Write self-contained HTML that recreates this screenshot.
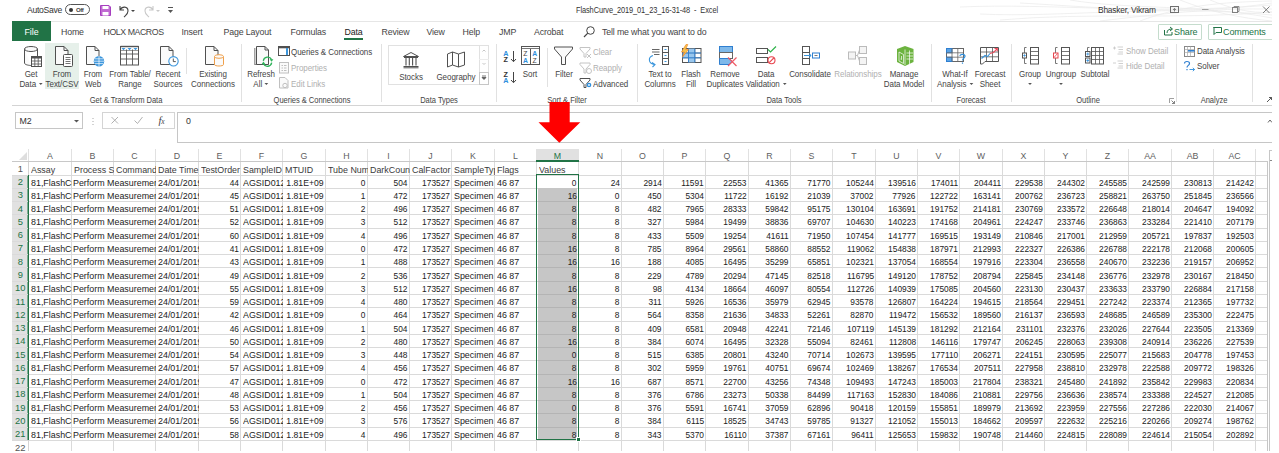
<!DOCTYPE html><html><head><meta charset="utf-8"><style>
*{margin:0;padding:0;box-sizing:border-box}
html,body{width:1279px;height:453px;overflow:hidden;background:#fff}
body{position:relative;font-family:"Liberation Sans",sans-serif;color:#262626}
.ab{position:absolute}
.t{position:absolute;white-space:nowrap;line-height:1}
.rb{font-size:8.4px;color:#444}
.ctr{transform:translateX(-50%)}
.dis{color:#b4b4b4}
.c{position:absolute;white-space:nowrap;overflow:hidden;font-size:9.9px;height:13px;color:#222}
.s{position:absolute;top:3.5px;line-height:1}
.sl{left:2.5px;transform:scale(0.9,1.0);transform-origin:0 0}
.sr{right:1.6px;transform-origin:100% 0}
.r{text-align:right}
.gl{position:absolute;background:#dadada}
.lb{font-size:8.6px;color:#444;transform:translateX(-50%) scaleX(0.93);letter-spacing:-0.05px}
.glb{transform:translateX(-50%) scaleX(0.88)}
.ll{transform:scaleX(0.93);transform-origin:0 0}
.dis{color:#b0b0b0}
.sep{top:44px;width:1px;height:58px;background:#e1e1e1}
.dd{display:inline-block;width:0;height:0;border-left:2.2px solid transparent;border-right:2.2px solid transparent;border-top:2.4px solid #555;vertical-align:middle;margin-left:3px;position:relative;top:-1px}
.tab{top:27.5px;font-size:8.8px;color:#444;letter-spacing:-0.15px}
</style></head><body>
<div class="gl" style="left:28px;top:149px;width:1px;height:13px;background:#e1e1e1"></div><div class="gl" style="left:71px;top:149px;width:1px;height:13px;background:#e1e1e1"></div><div class="gl" style="left:113px;top:149px;width:1px;height:13px;background:#e1e1e1"></div><div class="gl" style="left:155px;top:149px;width:1px;height:13px;background:#e1e1e1"></div><div class="gl" style="left:198px;top:149px;width:1px;height:13px;background:#e1e1e1"></div><div class="gl" style="left:240px;top:149px;width:1px;height:13px;background:#e1e1e1"></div><div class="gl" style="left:282px;top:149px;width:1px;height:13px;background:#e1e1e1"></div><div class="gl" style="left:325px;top:149px;width:1px;height:13px;background:#e1e1e1"></div><div class="gl" style="left:367px;top:149px;width:1px;height:13px;background:#e1e1e1"></div><div class="gl" style="left:409px;top:149px;width:1px;height:13px;background:#e1e1e1"></div><div class="gl" style="left:451px;top:149px;width:1px;height:13px;background:#e1e1e1"></div><div class="gl" style="left:494px;top:149px;width:1px;height:13px;background:#e1e1e1"></div><div class="gl" style="left:536px;top:149px;width:1px;height:13px;background:#e1e1e1"></div><div class="gl" style="left:578px;top:149px;width:1px;height:13px;background:#e1e1e1"></div><div class="gl" style="left:621px;top:149px;width:1px;height:13px;background:#e1e1e1"></div><div class="gl" style="left:663px;top:149px;width:1px;height:13px;background:#e1e1e1"></div><div class="gl" style="left:705px;top:149px;width:1px;height:13px;background:#e1e1e1"></div><div class="gl" style="left:748px;top:149px;width:1px;height:13px;background:#e1e1e1"></div><div class="gl" style="left:790px;top:149px;width:1px;height:13px;background:#e1e1e1"></div><div class="gl" style="left:832px;top:149px;width:1px;height:13px;background:#e1e1e1"></div><div class="gl" style="left:875px;top:149px;width:1px;height:13px;background:#e1e1e1"></div><div class="gl" style="left:917px;top:149px;width:1px;height:13px;background:#e1e1e1"></div><div class="gl" style="left:959px;top:149px;width:1px;height:13px;background:#e1e1e1"></div><div class="gl" style="left:1002px;top:149px;width:1px;height:13px;background:#e1e1e1"></div><div class="gl" style="left:1044px;top:149px;width:1px;height:13px;background:#e1e1e1"></div><div class="gl" style="left:1086px;top:149px;width:1px;height:13px;background:#e1e1e1"></div><div class="gl" style="left:1128px;top:149px;width:1px;height:13px;background:#e1e1e1"></div><div class="gl" style="left:1171px;top:149px;width:1px;height:13px;background:#e1e1e1"></div><div class="gl" style="left:1213px;top:149px;width:1px;height:13px;background:#e1e1e1"></div><div class="gl" style="left:1255px;top:149px;width:1px;height:13px;background:#e1e1e1"></div><div class="gl" style="left:12px;top:161px;width:1256px;height:1px;background:#c8c8c8"></div><div class="ab" style="left:536px;top:149px;width:43px;height:13px;background:#e1e1e1"></div><div class="ab" style="left:536px;top:160px;width:43px;height:2px;background:#217346"></div><svg class="ab" style="left:18px;top:151px" width="10" height="10"><polygon points="9,1 9,9 1,9" fill="#dedede"/></svg><div class="t ctr" style="left:50.0px;top:151.6px;font-size:8.8px;color:#606060">A</div><div class="t ctr" style="left:92.5px;top:151.6px;font-size:8.8px;color:#606060">B</div><div class="t ctr" style="left:134.5px;top:151.6px;font-size:8.8px;color:#606060">C</div><div class="t ctr" style="left:177.0px;top:151.6px;font-size:8.8px;color:#606060">D</div><div class="t ctr" style="left:219.5px;top:151.6px;font-size:8.8px;color:#606060">E</div><div class="t ctr" style="left:261.5px;top:151.6px;font-size:8.8px;color:#606060">F</div><div class="t ctr" style="left:304.0px;top:151.6px;font-size:8.8px;color:#606060">G</div><div class="t ctr" style="left:346.5px;top:151.6px;font-size:8.8px;color:#606060">H</div><div class="t ctr" style="left:388.5px;top:151.6px;font-size:8.8px;color:#606060">I</div><div class="t ctr" style="left:430.5px;top:151.6px;font-size:8.8px;color:#606060">J</div><div class="t ctr" style="left:473.0px;top:151.6px;font-size:8.8px;color:#606060">K</div><div class="t ctr" style="left:515.5px;top:151.6px;font-size:8.8px;color:#606060">L</div><div class="t ctr" style="left:557.5px;top:151.6px;font-size:8.8px;color:#217346">M</div><div class="t ctr" style="left:600.0px;top:151.6px;font-size:8.8px;color:#606060">N</div><div class="t ctr" style="left:642.5px;top:151.6px;font-size:8.8px;color:#606060">O</div><div class="t ctr" style="left:684.5px;top:151.6px;font-size:8.8px;color:#606060">P</div><div class="t ctr" style="left:727.0px;top:151.6px;font-size:8.8px;color:#606060">Q</div><div class="t ctr" style="left:769.5px;top:151.6px;font-size:8.8px;color:#606060">R</div><div class="t ctr" style="left:811.5px;top:151.6px;font-size:8.8px;color:#606060">S</div><div class="t ctr" style="left:854.0px;top:151.6px;font-size:8.8px;color:#606060">T</div><div class="t ctr" style="left:896.5px;top:151.6px;font-size:8.8px;color:#606060">U</div><div class="t ctr" style="left:938.5px;top:151.6px;font-size:8.8px;color:#606060">V</div><div class="t ctr" style="left:981.0px;top:151.6px;font-size:8.8px;color:#606060">W</div><div class="t ctr" style="left:1023.5px;top:151.6px;font-size:8.8px;color:#606060">X</div><div class="t ctr" style="left:1065.5px;top:151.6px;font-size:8.8px;color:#606060">Y</div><div class="t ctr" style="left:1107.5px;top:151.6px;font-size:8.8px;color:#606060">Z</div><div class="t ctr" style="left:1150.0px;top:151.6px;font-size:8.8px;color:#606060">AA</div><div class="t ctr" style="left:1192.5px;top:151.6px;font-size:8.8px;color:#606060">AB</div><div class="t ctr" style="left:1234.5px;top:151.6px;font-size:8.8px;color:#606060">AC</div><div class="ab" style="left:12px;top:175px;width:16px;height:265px;background:#e1e1e1"></div><div class="ab" style="left:28px;top:175px;width:1px;height:265px;background:#217346"></div><div class="ab" style="left:27px;top:175px;width:1px;height:265px;background:#7fae93"></div><div class="gl" style="left:12px;top:175px;width:1255px;height:1px"></div><div class="gl" style="left:12px;top:188px;width:1255px;height:1px"></div><div class="gl" style="left:12px;top:201px;width:1255px;height:1px"></div><div class="gl" style="left:12px;top:214px;width:1255px;height:1px"></div><div class="gl" style="left:12px;top:228px;width:1255px;height:1px"></div><div class="gl" style="left:12px;top:241px;width:1255px;height:1px"></div><div class="gl" style="left:12px;top:254px;width:1255px;height:1px"></div><div class="gl" style="left:12px;top:267px;width:1255px;height:1px"></div><div class="gl" style="left:12px;top:281px;width:1255px;height:1px"></div><div class="gl" style="left:12px;top:294px;width:1255px;height:1px"></div><div class="gl" style="left:12px;top:307px;width:1255px;height:1px"></div><div class="gl" style="left:12px;top:321px;width:1255px;height:1px"></div><div class="gl" style="left:12px;top:334px;width:1255px;height:1px"></div><div class="gl" style="left:12px;top:347px;width:1255px;height:1px"></div><div class="gl" style="left:12px;top:360px;width:1255px;height:1px"></div><div class="gl" style="left:12px;top:374px;width:1255px;height:1px"></div><div class="gl" style="left:12px;top:387px;width:1255px;height:1px"></div><div class="gl" style="left:12px;top:400px;width:1255px;height:1px"></div><div class="gl" style="left:12px;top:413px;width:1255px;height:1px"></div><div class="gl" style="left:12px;top:427px;width:1255px;height:1px"></div><div class="gl" style="left:12px;top:440px;width:1255px;height:1px"></div><div class="gl" style="left:12px;top:453px;width:1255px;height:1px"></div><div class="gl" style="left:28px;top:162px;width:1px;height:289px;background:#d4d4d4"></div><div class="gl" style="left:71px;top:162px;width:1px;height:289px"></div><div class="gl" style="left:113px;top:162px;width:1px;height:13px"></div><div class="gl" style="left:113px;top:439px;width:1px;height:12px"></div><div class="gl" style="left:155px;top:162px;width:1px;height:289px"></div><div class="gl" style="left:198px;top:162px;width:1px;height:289px"></div><div class="gl" style="left:240px;top:162px;width:1px;height:289px"></div><div class="gl" style="left:282px;top:162px;width:1px;height:289px"></div><div class="gl" style="left:325px;top:162px;width:1px;height:289px"></div><div class="gl" style="left:367px;top:162px;width:1px;height:289px"></div><div class="gl" style="left:409px;top:162px;width:1px;height:289px"></div><div class="gl" style="left:451px;top:162px;width:1px;height:289px"></div><div class="gl" style="left:494px;top:162px;width:1px;height:289px"></div><div class="gl" style="left:536px;top:162px;width:1px;height:289px"></div><div class="gl" style="left:578px;top:162px;width:1px;height:289px"></div><div class="gl" style="left:621px;top:162px;width:1px;height:289px"></div><div class="gl" style="left:663px;top:162px;width:1px;height:289px"></div><div class="gl" style="left:705px;top:162px;width:1px;height:289px"></div><div class="gl" style="left:748px;top:162px;width:1px;height:289px"></div><div class="gl" style="left:790px;top:162px;width:1px;height:289px"></div><div class="gl" style="left:832px;top:162px;width:1px;height:289px"></div><div class="gl" style="left:875px;top:162px;width:1px;height:289px"></div><div class="gl" style="left:917px;top:162px;width:1px;height:289px"></div><div class="gl" style="left:959px;top:162px;width:1px;height:289px"></div><div class="gl" style="left:1002px;top:162px;width:1px;height:289px"></div><div class="gl" style="left:1044px;top:162px;width:1px;height:289px"></div><div class="gl" style="left:1086px;top:162px;width:1px;height:289px"></div><div class="gl" style="left:1128px;top:162px;width:1px;height:289px"></div><div class="gl" style="left:1171px;top:162px;width:1px;height:289px"></div><div class="gl" style="left:1213px;top:162px;width:1px;height:289px"></div><div class="gl" style="left:1255px;top:162px;width:1px;height:289px"></div><div class="ab" style="left:28px;top:175px;width:1px;height:265px;background:#217346"></div><div class="ab" style="left:1267px;top:162px;width:1px;height:289px;background:#c6c6c6"></div><div class="ab" style="left:538px;top:188px;width:39px;height:251px;background:#c6c6c6"></div><div class="ab" style="left:538px;top:201px;width:39px;height:1px;background:#b4b4b4"></div><div class="ab" style="left:538px;top:214px;width:39px;height:1px;background:#b4b4b4"></div><div class="ab" style="left:538px;top:228px;width:39px;height:1px;background:#b4b4b4"></div><div class="ab" style="left:538px;top:241px;width:39px;height:1px;background:#b4b4b4"></div><div class="ab" style="left:538px;top:254px;width:39px;height:1px;background:#b4b4b4"></div><div class="ab" style="left:538px;top:267px;width:39px;height:1px;background:#b4b4b4"></div><div class="ab" style="left:538px;top:281px;width:39px;height:1px;background:#b4b4b4"></div><div class="ab" style="left:538px;top:294px;width:39px;height:1px;background:#b4b4b4"></div><div class="ab" style="left:538px;top:307px;width:39px;height:1px;background:#b4b4b4"></div><div class="ab" style="left:538px;top:321px;width:39px;height:1px;background:#b4b4b4"></div><div class="ab" style="left:538px;top:334px;width:39px;height:1px;background:#b4b4b4"></div><div class="ab" style="left:538px;top:347px;width:39px;height:1px;background:#b4b4b4"></div><div class="ab" style="left:538px;top:360px;width:39px;height:1px;background:#b4b4b4"></div><div class="ab" style="left:538px;top:374px;width:39px;height:1px;background:#b4b4b4"></div><div class="ab" style="left:538px;top:387px;width:39px;height:1px;background:#b4b4b4"></div><div class="ab" style="left:538px;top:400px;width:39px;height:1px;background:#b4b4b4"></div><div class="ab" style="left:538px;top:413px;width:39px;height:1px;background:#b4b4b4"></div><div class="ab" style="left:538px;top:427px;width:39px;height:1px;background:#b4b4b4"></div><div class="t ctr" style="left:20.3px;top:163.8px;font-size:9.4px;color:#555">1</div><div class="t ctr" style="left:20.3px;top:177.1px;font-size:9.4px;color:#217346">2</div><div class="t ctr" style="left:20.3px;top:190.3px;font-size:9.4px;color:#217346">3</div><div class="t ctr" style="left:20.3px;top:203.6px;font-size:9.4px;color:#217346">4</div><div class="t ctr" style="left:20.3px;top:216.9px;font-size:9.4px;color:#217346">5</div><div class="t ctr" style="left:20.3px;top:230.2px;font-size:9.4px;color:#217346">6</div><div class="t ctr" style="left:20.3px;top:243.4px;font-size:9.4px;color:#217346">7</div><div class="t ctr" style="left:20.3px;top:256.7px;font-size:9.4px;color:#217346">8</div><div class="t ctr" style="left:20.3px;top:270.0px;font-size:9.4px;color:#217346">9</div><div class="t ctr" style="left:20.3px;top:283.2px;font-size:9.4px;color:#217346">10</div><div class="t ctr" style="left:20.3px;top:296.5px;font-size:9.4px;color:#217346">11</div><div class="t ctr" style="left:20.3px;top:309.8px;font-size:9.4px;color:#217346">12</div><div class="t ctr" style="left:20.3px;top:323.0px;font-size:9.4px;color:#217346">13</div><div class="t ctr" style="left:20.3px;top:336.3px;font-size:9.4px;color:#217346">14</div><div class="t ctr" style="left:20.3px;top:349.6px;font-size:9.4px;color:#217346">15</div><div class="t ctr" style="left:20.3px;top:362.9px;font-size:9.4px;color:#217346">16</div><div class="t ctr" style="left:20.3px;top:376.1px;font-size:9.4px;color:#217346">17</div><div class="t ctr" style="left:20.3px;top:389.4px;font-size:9.4px;color:#217346">18</div><div class="t ctr" style="left:20.3px;top:402.7px;font-size:9.4px;color:#217346">19</div><div class="t ctr" style="left:20.3px;top:415.9px;font-size:9.4px;color:#217346">20</div><div class="t ctr" style="left:20.3px;top:429.2px;font-size:9.4px;color:#217346">21</div><div class="t ctr" style="left:20.3px;top:442.5px;font-size:9.4px;color:#555">22</div><div class="c" style="left:28.5px;top:161.8px;width:43.0px"><span class="s sl" style="top:2.8px;color:#3a3a3a">Assay</span></div><div class="c" style="left:71.5px;top:161.8px;width:42.0px"><span class="s sl" style="top:2.8px;color:#3a3a3a">Process S</span></div><div class="c" style="left:113.5px;top:161.8px;width:42.0px"><span class="s sl" style="top:2.8px;color:#3a3a3a">Command</span></div><div class="c" style="left:155.5px;top:161.8px;width:43.0px"><span class="s sl" style="top:2.8px;color:#3a3a3a">Date Time</span></div><div class="c" style="left:198.5px;top:161.8px;width:42.0px"><span class="s sl" style="top:2.8px;color:#3a3a3a">TestOrder</span></div><div class="c" style="left:240.5px;top:161.8px;width:42.0px"><span class="s sl" style="top:2.8px;color:#3a3a3a">SampleID</span></div><div class="c" style="left:282.5px;top:161.8px;width:43.0px"><span class="s sl" style="top:2.8px;color:#3a3a3a">MTUID</span></div><div class="c" style="left:325.5px;top:161.8px;width:42.0px"><span class="s sl" style="top:2.8px;color:#3a3a3a">Tube Num</span></div><div class="c" style="left:367.5px;top:161.8px;width:42.0px"><span class="s sl" style="top:2.8px;color:#3a3a3a">DarkCount</span></div><div class="c" style="left:409.5px;top:161.8px;width:42.0px"><span class="s sl" style="top:2.8px;color:#3a3a3a">CalFactor</span></div><div class="c" style="left:451.5px;top:161.8px;width:43.0px"><span class="s sl" style="top:2.8px;color:#3a3a3a">SampleType</span></div><div class="c" style="left:494.5px;top:161.8px;width:42.0px"><span class="s sl" style="top:2.8px;color:#3a3a3a">Flags</span></div><div class="c" style="left:536.5px;top:161.8px;width:42.0px"><span class="s sl" style="top:2.8px;color:#3a3a3a">Values</span></div><div class="c" style="left:28.5px;top:175.1px;width:43.0px"><span class="s sl" style="top:2.6px">81,FlashCurve</span></div><div class="c" style="left:71.5px;top:175.1px;width:84.0px"><span class="s sl" style="left:1px;top:2.6px">Perform Measurement</span></div><div class="c" style="left:155.5px;top:175.1px;width:43.0px"><span class="s sl" style="top:2.6px">24/01/2019</span></div><div class="c" style="left:198.5px;top:175.1px;width:42.0px"><span class="s sr" style="top:2.6px;transform:scale(0.845,1.0)">44</span></div><div class="c" style="left:240.5px;top:175.1px;width:42.0px"><span class="s sl" style="top:2.6px">AGSID0123</span></div><div class="c" style="left:282.5px;top:175.1px;width:43.0px"><span class="s sr" style="top:2.6px;transform:scale(0.875,1.0)">1.81E+09</span></div><div class="c" style="left:325.5px;top:175.1px;width:42.0px"><span class="s sr" style="top:2.6px;transform:scale(0.845,1.0)">0</span></div><div class="c" style="left:367.5px;top:175.1px;width:42.0px"><span class="s sr" style="top:2.6px;transform:scale(0.845,1.0)">504</span></div><div class="c" style="left:409.5px;top:175.1px;width:42.0px"><span class="s sr" style="top:2.6px;transform:scale(0.845,1.0)">173527</span></div><div class="c" style="left:451.5px;top:175.1px;width:43.0px"><span class="s sl" style="top:2.6px">Specimen</span></div><div class="c" style="left:494.5px;top:175.1px;width:42.0px"><span class="s sl" style="top:2.6px">46 87</span></div><div class="c" style="left:536.5px;top:175.1px;width:42.0px"><span class="s sr" style="top:2.6px;transform:scale(0.845,1.0)">0</span></div><div class="c" style="left:578.5px;top:175.1px;width:43.0px"><span class="s sr" style="top:2.6px;transform:scale(0.845,1.0)">24</span></div><div class="c" style="left:621.5px;top:175.1px;width:42.0px"><span class="s sr" style="top:2.6px;transform:scale(0.845,1.0)">2914</span></div><div class="c" style="left:663.5px;top:175.1px;width:42.0px"><span class="s sr" style="top:2.6px;transform:scale(0.845,1.0)">11591</span></div><div class="c" style="left:705.5px;top:175.1px;width:43.0px"><span class="s sr" style="top:2.6px;transform:scale(0.845,1.0)">22553</span></div><div class="c" style="left:748.5px;top:175.1px;width:42.0px"><span class="s sr" style="top:2.6px;transform:scale(0.845,1.0)">41365</span></div><div class="c" style="left:790.5px;top:175.1px;width:42.0px"><span class="s sr" style="top:2.6px;transform:scale(0.845,1.0)">71770</span></div><div class="c" style="left:832.5px;top:175.1px;width:43.0px"><span class="s sr" style="top:2.6px;transform:scale(0.845,1.0)">105244</span></div><div class="c" style="left:875.5px;top:175.1px;width:42.0px"><span class="s sr" style="top:2.6px;transform:scale(0.845,1.0)">139516</span></div><div class="c" style="left:917.5px;top:175.1px;width:42.0px"><span class="s sr" style="top:2.6px;transform:scale(0.845,1.0)">174011</span></div><div class="c" style="left:959.5px;top:175.1px;width:43.0px"><span class="s sr" style="top:2.6px;transform:scale(0.845,1.0)">204411</span></div><div class="c" style="left:1002.5px;top:175.1px;width:42.0px"><span class="s sr" style="top:2.6px;transform:scale(0.845,1.0)">229538</span></div><div class="c" style="left:1044.5px;top:175.1px;width:42.0px"><span class="s sr" style="top:2.6px;transform:scale(0.845,1.0)">244302</span></div><div class="c" style="left:1086.5px;top:175.1px;width:42.0px"><span class="s sr" style="top:2.6px;transform:scale(0.845,1.0)">245585</span></div><div class="c" style="left:1128.5px;top:175.1px;width:43.0px"><span class="s sr" style="top:2.6px;transform:scale(0.845,1.0)">242599</span></div><div class="c" style="left:1171.5px;top:175.1px;width:42.0px"><span class="s sr" style="top:2.6px;transform:scale(0.845,1.0)">230813</span></div><div class="c" style="left:1213.5px;top:175.1px;width:42.0px"><span class="s sr" style="top:2.6px;transform:scale(0.845,1.0)">214242</span></div><div class="c" style="left:28.5px;top:188.3px;width:43.0px"><span class="s sl" style="top:2.6px">81,FlashCurve</span></div><div class="c" style="left:71.5px;top:188.3px;width:84.0px"><span class="s sl" style="left:1px;top:2.6px">Perform Measurement</span></div><div class="c" style="left:155.5px;top:188.3px;width:43.0px"><span class="s sl" style="top:2.6px">24/01/2019</span></div><div class="c" style="left:198.5px;top:188.3px;width:42.0px"><span class="s sr" style="top:2.6px;transform:scale(0.845,1.0)">45</span></div><div class="c" style="left:240.5px;top:188.3px;width:42.0px"><span class="s sl" style="top:2.6px">AGSID0123</span></div><div class="c" style="left:282.5px;top:188.3px;width:43.0px"><span class="s sr" style="top:2.6px;transform:scale(0.875,1.0)">1.81E+09</span></div><div class="c" style="left:325.5px;top:188.3px;width:42.0px"><span class="s sr" style="top:2.6px;transform:scale(0.845,1.0)">1</span></div><div class="c" style="left:367.5px;top:188.3px;width:42.0px"><span class="s sr" style="top:2.6px;transform:scale(0.845,1.0)">472</span></div><div class="c" style="left:409.5px;top:188.3px;width:42.0px"><span class="s sr" style="top:2.6px;transform:scale(0.845,1.0)">173527</span></div><div class="c" style="left:451.5px;top:188.3px;width:43.0px"><span class="s sl" style="top:2.6px">Specimen</span></div><div class="c" style="left:494.5px;top:188.3px;width:42.0px"><span class="s sl" style="top:2.6px">46 87</span></div><div class="c" style="left:536.5px;top:188.3px;width:42.0px"><span class="s sr" style="top:2.6px;transform:scale(0.845,1.0)">16</span></div><div class="c" style="left:578.5px;top:188.3px;width:43.0px"><span class="s sr" style="top:2.6px;transform:scale(0.845,1.0)">0</span></div><div class="c" style="left:621.5px;top:188.3px;width:42.0px"><span class="s sr" style="top:2.6px;transform:scale(0.845,1.0)">450</span></div><div class="c" style="left:663.5px;top:188.3px;width:42.0px"><span class="s sr" style="top:2.6px;transform:scale(0.845,1.0)">5304</span></div><div class="c" style="left:705.5px;top:188.3px;width:43.0px"><span class="s sr" style="top:2.6px;transform:scale(0.845,1.0)">11722</span></div><div class="c" style="left:748.5px;top:188.3px;width:42.0px"><span class="s sr" style="top:2.6px;transform:scale(0.845,1.0)">16192</span></div><div class="c" style="left:790.5px;top:188.3px;width:42.0px"><span class="s sr" style="top:2.6px;transform:scale(0.845,1.0)">21039</span></div><div class="c" style="left:832.5px;top:188.3px;width:43.0px"><span class="s sr" style="top:2.6px;transform:scale(0.845,1.0)">37002</span></div><div class="c" style="left:875.5px;top:188.3px;width:42.0px"><span class="s sr" style="top:2.6px;transform:scale(0.845,1.0)">77926</span></div><div class="c" style="left:917.5px;top:188.3px;width:42.0px"><span class="s sr" style="top:2.6px;transform:scale(0.845,1.0)">122722</span></div><div class="c" style="left:959.5px;top:188.3px;width:43.0px"><span class="s sr" style="top:2.6px;transform:scale(0.845,1.0)">163141</span></div><div class="c" style="left:1002.5px;top:188.3px;width:42.0px"><span class="s sr" style="top:2.6px;transform:scale(0.845,1.0)">200762</span></div><div class="c" style="left:1044.5px;top:188.3px;width:42.0px"><span class="s sr" style="top:2.6px;transform:scale(0.845,1.0)">236723</span></div><div class="c" style="left:1086.5px;top:188.3px;width:42.0px"><span class="s sr" style="top:2.6px;transform:scale(0.845,1.0)">258821</span></div><div class="c" style="left:1128.5px;top:188.3px;width:43.0px"><span class="s sr" style="top:2.6px;transform:scale(0.845,1.0)">263750</span></div><div class="c" style="left:1171.5px;top:188.3px;width:42.0px"><span class="s sr" style="top:2.6px;transform:scale(0.845,1.0)">251845</span></div><div class="c" style="left:1213.5px;top:188.3px;width:42.0px"><span class="s sr" style="top:2.6px;transform:scale(0.845,1.0)">236566</span></div><div class="c" style="left:28.5px;top:201.6px;width:43.0px"><span class="s sl" style="top:2.6px">81,FlashCurve</span></div><div class="c" style="left:71.5px;top:201.6px;width:84.0px"><span class="s sl" style="left:1px;top:2.6px">Perform Measurement</span></div><div class="c" style="left:155.5px;top:201.6px;width:43.0px"><span class="s sl" style="top:2.6px">24/01/2019</span></div><div class="c" style="left:198.5px;top:201.6px;width:42.0px"><span class="s sr" style="top:2.6px;transform:scale(0.845,1.0)">51</span></div><div class="c" style="left:240.5px;top:201.6px;width:42.0px"><span class="s sl" style="top:2.6px">AGSID0123</span></div><div class="c" style="left:282.5px;top:201.6px;width:43.0px"><span class="s sr" style="top:2.6px;transform:scale(0.875,1.0)">1.81E+09</span></div><div class="c" style="left:325.5px;top:201.6px;width:42.0px"><span class="s sr" style="top:2.6px;transform:scale(0.845,1.0)">2</span></div><div class="c" style="left:367.5px;top:201.6px;width:42.0px"><span class="s sr" style="top:2.6px;transform:scale(0.845,1.0)">496</span></div><div class="c" style="left:409.5px;top:201.6px;width:42.0px"><span class="s sr" style="top:2.6px;transform:scale(0.845,1.0)">173527</span></div><div class="c" style="left:451.5px;top:201.6px;width:43.0px"><span class="s sl" style="top:2.6px">Specimen</span></div><div class="c" style="left:494.5px;top:201.6px;width:42.0px"><span class="s sl" style="top:2.6px">46 87</span></div><div class="c" style="left:536.5px;top:201.6px;width:42.0px"><span class="s sr" style="top:2.6px;transform:scale(0.845,1.0)">8</span></div><div class="c" style="left:578.5px;top:201.6px;width:43.0px"><span class="s sr" style="top:2.6px;transform:scale(0.845,1.0)">8</span></div><div class="c" style="left:621.5px;top:201.6px;width:42.0px"><span class="s sr" style="top:2.6px;transform:scale(0.845,1.0)">482</span></div><div class="c" style="left:663.5px;top:201.6px;width:42.0px"><span class="s sr" style="top:2.6px;transform:scale(0.845,1.0)">7965</span></div><div class="c" style="left:705.5px;top:201.6px;width:43.0px"><span class="s sr" style="top:2.6px;transform:scale(0.845,1.0)">28333</span></div><div class="c" style="left:748.5px;top:201.6px;width:42.0px"><span class="s sr" style="top:2.6px;transform:scale(0.845,1.0)">59842</span></div><div class="c" style="left:790.5px;top:201.6px;width:42.0px"><span class="s sr" style="top:2.6px;transform:scale(0.845,1.0)">95175</span></div><div class="c" style="left:832.5px;top:201.6px;width:43.0px"><span class="s sr" style="top:2.6px;transform:scale(0.845,1.0)">130104</span></div><div class="c" style="left:875.5px;top:201.6px;width:42.0px"><span class="s sr" style="top:2.6px;transform:scale(0.845,1.0)">163691</span></div><div class="c" style="left:917.5px;top:201.6px;width:42.0px"><span class="s sr" style="top:2.6px;transform:scale(0.845,1.0)">191752</span></div><div class="c" style="left:959.5px;top:201.6px;width:43.0px"><span class="s sr" style="top:2.6px;transform:scale(0.845,1.0)">214181</span></div><div class="c" style="left:1002.5px;top:201.6px;width:42.0px"><span class="s sr" style="top:2.6px;transform:scale(0.845,1.0)">230769</span></div><div class="c" style="left:1044.5px;top:201.6px;width:42.0px"><span class="s sr" style="top:2.6px;transform:scale(0.845,1.0)">233572</span></div><div class="c" style="left:1086.5px;top:201.6px;width:42.0px"><span class="s sr" style="top:2.6px;transform:scale(0.845,1.0)">226648</span></div><div class="c" style="left:1128.5px;top:201.6px;width:43.0px"><span class="s sr" style="top:2.6px;transform:scale(0.845,1.0)">218014</span></div><div class="c" style="left:1171.5px;top:201.6px;width:42.0px"><span class="s sr" style="top:2.6px;transform:scale(0.845,1.0)">204647</span></div><div class="c" style="left:1213.5px;top:201.6px;width:42.0px"><span class="s sr" style="top:2.6px;transform:scale(0.845,1.0)">194092</span></div><div class="c" style="left:28.5px;top:214.9px;width:43.0px"><span class="s sl" style="top:2.6px">81,FlashCurve</span></div><div class="c" style="left:71.5px;top:214.9px;width:84.0px"><span class="s sl" style="left:1px;top:2.6px">Perform Measurement</span></div><div class="c" style="left:155.5px;top:214.9px;width:43.0px"><span class="s sl" style="top:2.6px">24/01/2019</span></div><div class="c" style="left:198.5px;top:214.9px;width:42.0px"><span class="s sr" style="top:2.6px;transform:scale(0.845,1.0)">52</span></div><div class="c" style="left:240.5px;top:214.9px;width:42.0px"><span class="s sl" style="top:2.6px">AGSID0123</span></div><div class="c" style="left:282.5px;top:214.9px;width:43.0px"><span class="s sr" style="top:2.6px;transform:scale(0.875,1.0)">1.81E+09</span></div><div class="c" style="left:325.5px;top:214.9px;width:42.0px"><span class="s sr" style="top:2.6px;transform:scale(0.845,1.0)">3</span></div><div class="c" style="left:367.5px;top:214.9px;width:42.0px"><span class="s sr" style="top:2.6px;transform:scale(0.845,1.0)">512</span></div><div class="c" style="left:409.5px;top:214.9px;width:42.0px"><span class="s sr" style="top:2.6px;transform:scale(0.845,1.0)">173527</span></div><div class="c" style="left:451.5px;top:214.9px;width:43.0px"><span class="s sl" style="top:2.6px">Specimen</span></div><div class="c" style="left:494.5px;top:214.9px;width:42.0px"><span class="s sl" style="top:2.6px">46 87</span></div><div class="c" style="left:536.5px;top:214.9px;width:42.0px"><span class="s sr" style="top:2.6px;transform:scale(0.845,1.0)">8</span></div><div class="c" style="left:578.5px;top:214.9px;width:43.0px"><span class="s sr" style="top:2.6px;transform:scale(0.845,1.0)">8</span></div><div class="c" style="left:621.5px;top:214.9px;width:42.0px"><span class="s sr" style="top:2.6px;transform:scale(0.845,1.0)">327</span></div><div class="c" style="left:663.5px;top:214.9px;width:42.0px"><span class="s sr" style="top:2.6px;transform:scale(0.845,1.0)">5984</span></div><div class="c" style="left:705.5px;top:214.9px;width:43.0px"><span class="s sr" style="top:2.6px;transform:scale(0.845,1.0)">19499</span></div><div class="c" style="left:748.5px;top:214.9px;width:42.0px"><span class="s sr" style="top:2.6px;transform:scale(0.845,1.0)">38836</span></div><div class="c" style="left:790.5px;top:214.9px;width:42.0px"><span class="s sr" style="top:2.6px;transform:scale(0.845,1.0)">69707</span></div><div class="c" style="left:832.5px;top:214.9px;width:43.0px"><span class="s sr" style="top:2.6px;transform:scale(0.845,1.0)">104630</span></div><div class="c" style="left:875.5px;top:214.9px;width:42.0px"><span class="s sr" style="top:2.6px;transform:scale(0.845,1.0)">140223</span></div><div class="c" style="left:917.5px;top:214.9px;width:42.0px"><span class="s sr" style="top:2.6px;transform:scale(0.845,1.0)">174168</span></div><div class="c" style="left:959.5px;top:214.9px;width:43.0px"><span class="s sr" style="top:2.6px;transform:scale(0.845,1.0)">204961</span></div><div class="c" style="left:1002.5px;top:214.9px;width:42.0px"><span class="s sr" style="top:2.6px;transform:scale(0.845,1.0)">224247</span></div><div class="c" style="left:1044.5px;top:214.9px;width:42.0px"><span class="s sr" style="top:2.6px;transform:scale(0.845,1.0)">233746</span></div><div class="c" style="left:1086.5px;top:214.9px;width:42.0px"><span class="s sr" style="top:2.6px;transform:scale(0.845,1.0)">236863</span></div><div class="c" style="left:1128.5px;top:214.9px;width:43.0px"><span class="s sr" style="top:2.6px;transform:scale(0.845,1.0)">233284</span></div><div class="c" style="left:1171.5px;top:214.9px;width:42.0px"><span class="s sr" style="top:2.6px;transform:scale(0.845,1.0)">221410</span></div><div class="c" style="left:1213.5px;top:214.9px;width:42.0px"><span class="s sr" style="top:2.6px;transform:scale(0.845,1.0)">207179</span></div><div class="c" style="left:28.5px;top:228.2px;width:43.0px"><span class="s sl" style="top:2.6px">81,FlashCurve</span></div><div class="c" style="left:71.5px;top:228.2px;width:84.0px"><span class="s sl" style="left:1px;top:2.6px">Perform Measurement</span></div><div class="c" style="left:155.5px;top:228.2px;width:43.0px"><span class="s sl" style="top:2.6px">24/01/2019</span></div><div class="c" style="left:198.5px;top:228.2px;width:42.0px"><span class="s sr" style="top:2.6px;transform:scale(0.845,1.0)">60</span></div><div class="c" style="left:240.5px;top:228.2px;width:42.0px"><span class="s sl" style="top:2.6px">AGSID0123</span></div><div class="c" style="left:282.5px;top:228.2px;width:43.0px"><span class="s sr" style="top:2.6px;transform:scale(0.875,1.0)">1.81E+09</span></div><div class="c" style="left:325.5px;top:228.2px;width:42.0px"><span class="s sr" style="top:2.6px;transform:scale(0.845,1.0)">4</span></div><div class="c" style="left:367.5px;top:228.2px;width:42.0px"><span class="s sr" style="top:2.6px;transform:scale(0.845,1.0)">496</span></div><div class="c" style="left:409.5px;top:228.2px;width:42.0px"><span class="s sr" style="top:2.6px;transform:scale(0.845,1.0)">173527</span></div><div class="c" style="left:451.5px;top:228.2px;width:43.0px"><span class="s sl" style="top:2.6px">Specimen</span></div><div class="c" style="left:494.5px;top:228.2px;width:42.0px"><span class="s sl" style="top:2.6px">46 87</span></div><div class="c" style="left:536.5px;top:228.2px;width:42.0px"><span class="s sr" style="top:2.6px;transform:scale(0.845,1.0)">8</span></div><div class="c" style="left:578.5px;top:228.2px;width:43.0px"><span class="s sr" style="top:2.6px;transform:scale(0.845,1.0)">8</span></div><div class="c" style="left:621.5px;top:228.2px;width:42.0px"><span class="s sr" style="top:2.6px;transform:scale(0.845,1.0)">433</span></div><div class="c" style="left:663.5px;top:228.2px;width:42.0px"><span class="s sr" style="top:2.6px;transform:scale(0.845,1.0)">5509</span></div><div class="c" style="left:705.5px;top:228.2px;width:43.0px"><span class="s sr" style="top:2.6px;transform:scale(0.845,1.0)">19254</span></div><div class="c" style="left:748.5px;top:228.2px;width:42.0px"><span class="s sr" style="top:2.6px;transform:scale(0.845,1.0)">41611</span></div><div class="c" style="left:790.5px;top:228.2px;width:42.0px"><span class="s sr" style="top:2.6px;transform:scale(0.845,1.0)">71950</span></div><div class="c" style="left:832.5px;top:228.2px;width:43.0px"><span class="s sr" style="top:2.6px;transform:scale(0.845,1.0)">107454</span></div><div class="c" style="left:875.5px;top:228.2px;width:42.0px"><span class="s sr" style="top:2.6px;transform:scale(0.845,1.0)">141777</span></div><div class="c" style="left:917.5px;top:228.2px;width:42.0px"><span class="s sr" style="top:2.6px;transform:scale(0.845,1.0)">169515</span></div><div class="c" style="left:959.5px;top:228.2px;width:43.0px"><span class="s sr" style="top:2.6px;transform:scale(0.845,1.0)">193149</span></div><div class="c" style="left:1002.5px;top:228.2px;width:42.0px"><span class="s sr" style="top:2.6px;transform:scale(0.845,1.0)">210846</span></div><div class="c" style="left:1044.5px;top:228.2px;width:42.0px"><span class="s sr" style="top:2.6px;transform:scale(0.845,1.0)">217001</span></div><div class="c" style="left:1086.5px;top:228.2px;width:42.0px"><span class="s sr" style="top:2.6px;transform:scale(0.845,1.0)">212959</span></div><div class="c" style="left:1128.5px;top:228.2px;width:43.0px"><span class="s sr" style="top:2.6px;transform:scale(0.845,1.0)">205721</span></div><div class="c" style="left:1171.5px;top:228.2px;width:42.0px"><span class="s sr" style="top:2.6px;transform:scale(0.845,1.0)">197837</span></div><div class="c" style="left:1213.5px;top:228.2px;width:42.0px"><span class="s sr" style="top:2.6px;transform:scale(0.845,1.0)">192503</span></div><div class="c" style="left:28.5px;top:241.4px;width:43.0px"><span class="s sl" style="top:2.6px">81,FlashCurve</span></div><div class="c" style="left:71.5px;top:241.4px;width:84.0px"><span class="s sl" style="left:1px;top:2.6px">Perform Measurement</span></div><div class="c" style="left:155.5px;top:241.4px;width:43.0px"><span class="s sl" style="top:2.6px">24/01/2019</span></div><div class="c" style="left:198.5px;top:241.4px;width:42.0px"><span class="s sr" style="top:2.6px;transform:scale(0.845,1.0)">41</span></div><div class="c" style="left:240.5px;top:241.4px;width:42.0px"><span class="s sl" style="top:2.6px">AGSID0123</span></div><div class="c" style="left:282.5px;top:241.4px;width:43.0px"><span class="s sr" style="top:2.6px;transform:scale(0.875,1.0)">1.81E+09</span></div><div class="c" style="left:325.5px;top:241.4px;width:42.0px"><span class="s sr" style="top:2.6px;transform:scale(0.845,1.0)">0</span></div><div class="c" style="left:367.5px;top:241.4px;width:42.0px"><span class="s sr" style="top:2.6px;transform:scale(0.845,1.0)">472</span></div><div class="c" style="left:409.5px;top:241.4px;width:42.0px"><span class="s sr" style="top:2.6px;transform:scale(0.845,1.0)">173527</span></div><div class="c" style="left:451.5px;top:241.4px;width:43.0px"><span class="s sl" style="top:2.6px">Specimen</span></div><div class="c" style="left:494.5px;top:241.4px;width:42.0px"><span class="s sl" style="top:2.6px">46 87</span></div><div class="c" style="left:536.5px;top:241.4px;width:42.0px"><span class="s sr" style="top:2.6px;transform:scale(0.845,1.0)">16</span></div><div class="c" style="left:578.5px;top:241.4px;width:43.0px"><span class="s sr" style="top:2.6px;transform:scale(0.845,1.0)">8</span></div><div class="c" style="left:621.5px;top:241.4px;width:42.0px"><span class="s sr" style="top:2.6px;transform:scale(0.845,1.0)">785</span></div><div class="c" style="left:663.5px;top:241.4px;width:42.0px"><span class="s sr" style="top:2.6px;transform:scale(0.845,1.0)">8964</span></div><div class="c" style="left:705.5px;top:241.4px;width:43.0px"><span class="s sr" style="top:2.6px;transform:scale(0.845,1.0)">29561</span></div><div class="c" style="left:748.5px;top:241.4px;width:42.0px"><span class="s sr" style="top:2.6px;transform:scale(0.845,1.0)">58860</span></div><div class="c" style="left:790.5px;top:241.4px;width:42.0px"><span class="s sr" style="top:2.6px;transform:scale(0.845,1.0)">88552</span></div><div class="c" style="left:832.5px;top:241.4px;width:43.0px"><span class="s sr" style="top:2.6px;transform:scale(0.845,1.0)">119062</span></div><div class="c" style="left:875.5px;top:241.4px;width:42.0px"><span class="s sr" style="top:2.6px;transform:scale(0.845,1.0)">154838</span></div><div class="c" style="left:917.5px;top:241.4px;width:42.0px"><span class="s sr" style="top:2.6px;transform:scale(0.845,1.0)">187971</span></div><div class="c" style="left:959.5px;top:241.4px;width:43.0px"><span class="s sr" style="top:2.6px;transform:scale(0.845,1.0)">212993</span></div><div class="c" style="left:1002.5px;top:241.4px;width:42.0px"><span class="s sr" style="top:2.6px;transform:scale(0.845,1.0)">222327</span></div><div class="c" style="left:1044.5px;top:241.4px;width:42.0px"><span class="s sr" style="top:2.6px;transform:scale(0.845,1.0)">226386</span></div><div class="c" style="left:1086.5px;top:241.4px;width:42.0px"><span class="s sr" style="top:2.6px;transform:scale(0.845,1.0)">226788</span></div><div class="c" style="left:1128.5px;top:241.4px;width:43.0px"><span class="s sr" style="top:2.6px;transform:scale(0.845,1.0)">222178</span></div><div class="c" style="left:1171.5px;top:241.4px;width:42.0px"><span class="s sr" style="top:2.6px;transform:scale(0.845,1.0)">212068</span></div><div class="c" style="left:1213.5px;top:241.4px;width:42.0px"><span class="s sr" style="top:2.6px;transform:scale(0.845,1.0)">200605</span></div><div class="c" style="left:28.5px;top:254.7px;width:43.0px"><span class="s sl" style="top:2.6px">81,FlashCurve</span></div><div class="c" style="left:71.5px;top:254.7px;width:84.0px"><span class="s sl" style="left:1px;top:2.6px">Perform Measurement</span></div><div class="c" style="left:155.5px;top:254.7px;width:43.0px"><span class="s sl" style="top:2.6px">24/01/2019</span></div><div class="c" style="left:198.5px;top:254.7px;width:42.0px"><span class="s sr" style="top:2.6px;transform:scale(0.845,1.0)">43</span></div><div class="c" style="left:240.5px;top:254.7px;width:42.0px"><span class="s sl" style="top:2.6px">AGSID0123</span></div><div class="c" style="left:282.5px;top:254.7px;width:43.0px"><span class="s sr" style="top:2.6px;transform:scale(0.875,1.0)">1.81E+09</span></div><div class="c" style="left:325.5px;top:254.7px;width:42.0px"><span class="s sr" style="top:2.6px;transform:scale(0.845,1.0)">1</span></div><div class="c" style="left:367.5px;top:254.7px;width:42.0px"><span class="s sr" style="top:2.6px;transform:scale(0.845,1.0)">488</span></div><div class="c" style="left:409.5px;top:254.7px;width:42.0px"><span class="s sr" style="top:2.6px;transform:scale(0.845,1.0)">173527</span></div><div class="c" style="left:451.5px;top:254.7px;width:43.0px"><span class="s sl" style="top:2.6px">Specimen</span></div><div class="c" style="left:494.5px;top:254.7px;width:42.0px"><span class="s sl" style="top:2.6px">46 87</span></div><div class="c" style="left:536.5px;top:254.7px;width:42.0px"><span class="s sr" style="top:2.6px;transform:scale(0.845,1.0)">16</span></div><div class="c" style="left:578.5px;top:254.7px;width:43.0px"><span class="s sr" style="top:2.6px;transform:scale(0.845,1.0)">16</span></div><div class="c" style="left:621.5px;top:254.7px;width:42.0px"><span class="s sr" style="top:2.6px;transform:scale(0.845,1.0)">188</span></div><div class="c" style="left:663.5px;top:254.7px;width:42.0px"><span class="s sr" style="top:2.6px;transform:scale(0.845,1.0)">4085</span></div><div class="c" style="left:705.5px;top:254.7px;width:43.0px"><span class="s sr" style="top:2.6px;transform:scale(0.845,1.0)">16495</span></div><div class="c" style="left:748.5px;top:254.7px;width:42.0px"><span class="s sr" style="top:2.6px;transform:scale(0.845,1.0)">35299</span></div><div class="c" style="left:790.5px;top:254.7px;width:42.0px"><span class="s sr" style="top:2.6px;transform:scale(0.845,1.0)">65851</span></div><div class="c" style="left:832.5px;top:254.7px;width:43.0px"><span class="s sr" style="top:2.6px;transform:scale(0.845,1.0)">102321</span></div><div class="c" style="left:875.5px;top:254.7px;width:42.0px"><span class="s sr" style="top:2.6px;transform:scale(0.845,1.0)">137054</span></div><div class="c" style="left:917.5px;top:254.7px;width:42.0px"><span class="s sr" style="top:2.6px;transform:scale(0.845,1.0)">168554</span></div><div class="c" style="left:959.5px;top:254.7px;width:43.0px"><span class="s sr" style="top:2.6px;transform:scale(0.845,1.0)">197916</span></div><div class="c" style="left:1002.5px;top:254.7px;width:42.0px"><span class="s sr" style="top:2.6px;transform:scale(0.845,1.0)">223304</span></div><div class="c" style="left:1044.5px;top:254.7px;width:42.0px"><span class="s sr" style="top:2.6px;transform:scale(0.845,1.0)">236558</span></div><div class="c" style="left:1086.5px;top:254.7px;width:42.0px"><span class="s sr" style="top:2.6px;transform:scale(0.845,1.0)">240670</span></div><div class="c" style="left:1128.5px;top:254.7px;width:43.0px"><span class="s sr" style="top:2.6px;transform:scale(0.845,1.0)">232236</span></div><div class="c" style="left:1171.5px;top:254.7px;width:42.0px"><span class="s sr" style="top:2.6px;transform:scale(0.845,1.0)">219157</span></div><div class="c" style="left:1213.5px;top:254.7px;width:42.0px"><span class="s sr" style="top:2.6px;transform:scale(0.845,1.0)">206952</span></div><div class="c" style="left:28.5px;top:268.0px;width:43.0px"><span class="s sl" style="top:2.6px">81,FlashCurve</span></div><div class="c" style="left:71.5px;top:268.0px;width:84.0px"><span class="s sl" style="left:1px;top:2.6px">Perform Measurement</span></div><div class="c" style="left:155.5px;top:268.0px;width:43.0px"><span class="s sl" style="top:2.6px">24/01/2019</span></div><div class="c" style="left:198.5px;top:268.0px;width:42.0px"><span class="s sr" style="top:2.6px;transform:scale(0.845,1.0)">49</span></div><div class="c" style="left:240.5px;top:268.0px;width:42.0px"><span class="s sl" style="top:2.6px">AGSID0123</span></div><div class="c" style="left:282.5px;top:268.0px;width:43.0px"><span class="s sr" style="top:2.6px;transform:scale(0.875,1.0)">1.81E+09</span></div><div class="c" style="left:325.5px;top:268.0px;width:42.0px"><span class="s sr" style="top:2.6px;transform:scale(0.845,1.0)">2</span></div><div class="c" style="left:367.5px;top:268.0px;width:42.0px"><span class="s sr" style="top:2.6px;transform:scale(0.845,1.0)">536</span></div><div class="c" style="left:409.5px;top:268.0px;width:42.0px"><span class="s sr" style="top:2.6px;transform:scale(0.845,1.0)">173527</span></div><div class="c" style="left:451.5px;top:268.0px;width:43.0px"><span class="s sl" style="top:2.6px">Specimen</span></div><div class="c" style="left:494.5px;top:268.0px;width:42.0px"><span class="s sl" style="top:2.6px">46 87</span></div><div class="c" style="left:536.5px;top:268.0px;width:42.0px"><span class="s sr" style="top:2.6px;transform:scale(0.845,1.0)">8</span></div><div class="c" style="left:578.5px;top:268.0px;width:43.0px"><span class="s sr" style="top:2.6px;transform:scale(0.845,1.0)">8</span></div><div class="c" style="left:621.5px;top:268.0px;width:42.0px"><span class="s sr" style="top:2.6px;transform:scale(0.845,1.0)">229</span></div><div class="c" style="left:663.5px;top:268.0px;width:42.0px"><span class="s sr" style="top:2.6px;transform:scale(0.845,1.0)">4789</span></div><div class="c" style="left:705.5px;top:268.0px;width:43.0px"><span class="s sr" style="top:2.6px;transform:scale(0.845,1.0)">20294</span></div><div class="c" style="left:748.5px;top:268.0px;width:42.0px"><span class="s sr" style="top:2.6px;transform:scale(0.845,1.0)">47145</span></div><div class="c" style="left:790.5px;top:268.0px;width:42.0px"><span class="s sr" style="top:2.6px;transform:scale(0.845,1.0)">82518</span></div><div class="c" style="left:832.5px;top:268.0px;width:43.0px"><span class="s sr" style="top:2.6px;transform:scale(0.845,1.0)">116795</span></div><div class="c" style="left:875.5px;top:268.0px;width:42.0px"><span class="s sr" style="top:2.6px;transform:scale(0.845,1.0)">149120</span></div><div class="c" style="left:917.5px;top:268.0px;width:42.0px"><span class="s sr" style="top:2.6px;transform:scale(0.845,1.0)">178752</span></div><div class="c" style="left:959.5px;top:268.0px;width:43.0px"><span class="s sr" style="top:2.6px;transform:scale(0.845,1.0)">208794</span></div><div class="c" style="left:1002.5px;top:268.0px;width:42.0px"><span class="s sr" style="top:2.6px;transform:scale(0.845,1.0)">225845</span></div><div class="c" style="left:1044.5px;top:268.0px;width:42.0px"><span class="s sr" style="top:2.6px;transform:scale(0.845,1.0)">234148</span></div><div class="c" style="left:1086.5px;top:268.0px;width:42.0px"><span class="s sr" style="top:2.6px;transform:scale(0.845,1.0)">236776</span></div><div class="c" style="left:1128.5px;top:268.0px;width:43.0px"><span class="s sr" style="top:2.6px;transform:scale(0.845,1.0)">232978</span></div><div class="c" style="left:1171.5px;top:268.0px;width:42.0px"><span class="s sr" style="top:2.6px;transform:scale(0.845,1.0)">230167</span></div><div class="c" style="left:1213.5px;top:268.0px;width:42.0px"><span class="s sr" style="top:2.6px;transform:scale(0.845,1.0)">218450</span></div><div class="c" style="left:28.5px;top:281.2px;width:43.0px"><span class="s sl" style="top:2.6px">81,FlashCurve</span></div><div class="c" style="left:71.5px;top:281.2px;width:84.0px"><span class="s sl" style="left:1px;top:2.6px">Perform Measurement</span></div><div class="c" style="left:155.5px;top:281.2px;width:43.0px"><span class="s sl" style="top:2.6px">24/01/2019</span></div><div class="c" style="left:198.5px;top:281.2px;width:42.0px"><span class="s sr" style="top:2.6px;transform:scale(0.845,1.0)">55</span></div><div class="c" style="left:240.5px;top:281.2px;width:42.0px"><span class="s sl" style="top:2.6px">AGSID0123</span></div><div class="c" style="left:282.5px;top:281.2px;width:43.0px"><span class="s sr" style="top:2.6px;transform:scale(0.875,1.0)">1.81E+09</span></div><div class="c" style="left:325.5px;top:281.2px;width:42.0px"><span class="s sr" style="top:2.6px;transform:scale(0.845,1.0)">3</span></div><div class="c" style="left:367.5px;top:281.2px;width:42.0px"><span class="s sr" style="top:2.6px;transform:scale(0.845,1.0)">512</span></div><div class="c" style="left:409.5px;top:281.2px;width:42.0px"><span class="s sr" style="top:2.6px;transform:scale(0.845,1.0)">173527</span></div><div class="c" style="left:451.5px;top:281.2px;width:43.0px"><span class="s sl" style="top:2.6px">Specimen</span></div><div class="c" style="left:494.5px;top:281.2px;width:42.0px"><span class="s sl" style="top:2.6px">46 87</span></div><div class="c" style="left:536.5px;top:281.2px;width:42.0px"><span class="s sr" style="top:2.6px;transform:scale(0.845,1.0)">16</span></div><div class="c" style="left:578.5px;top:281.2px;width:43.0px"><span class="s sr" style="top:2.6px;transform:scale(0.845,1.0)">8</span></div><div class="c" style="left:621.5px;top:281.2px;width:42.0px"><span class="s sr" style="top:2.6px;transform:scale(0.845,1.0)">98</span></div><div class="c" style="left:663.5px;top:281.2px;width:42.0px"><span class="s sr" style="top:2.6px;transform:scale(0.845,1.0)">4134</span></div><div class="c" style="left:705.5px;top:281.2px;width:43.0px"><span class="s sr" style="top:2.6px;transform:scale(0.845,1.0)">18664</span></div><div class="c" style="left:748.5px;top:281.2px;width:42.0px"><span class="s sr" style="top:2.6px;transform:scale(0.845,1.0)">46097</span></div><div class="c" style="left:790.5px;top:281.2px;width:42.0px"><span class="s sr" style="top:2.6px;transform:scale(0.845,1.0)">80554</span></div><div class="c" style="left:832.5px;top:281.2px;width:43.0px"><span class="s sr" style="top:2.6px;transform:scale(0.845,1.0)">112726</span></div><div class="c" style="left:875.5px;top:281.2px;width:42.0px"><span class="s sr" style="top:2.6px;transform:scale(0.845,1.0)">140939</span></div><div class="c" style="left:917.5px;top:281.2px;width:42.0px"><span class="s sr" style="top:2.6px;transform:scale(0.845,1.0)">175085</span></div><div class="c" style="left:959.5px;top:281.2px;width:43.0px"><span class="s sr" style="top:2.6px;transform:scale(0.845,1.0)">204560</span></div><div class="c" style="left:1002.5px;top:281.2px;width:42.0px"><span class="s sr" style="top:2.6px;transform:scale(0.845,1.0)">223130</span></div><div class="c" style="left:1044.5px;top:281.2px;width:42.0px"><span class="s sr" style="top:2.6px;transform:scale(0.845,1.0)">230437</span></div><div class="c" style="left:1086.5px;top:281.2px;width:42.0px"><span class="s sr" style="top:2.6px;transform:scale(0.845,1.0)">233633</span></div><div class="c" style="left:1128.5px;top:281.2px;width:43.0px"><span class="s sr" style="top:2.6px;transform:scale(0.845,1.0)">233790</span></div><div class="c" style="left:1171.5px;top:281.2px;width:42.0px"><span class="s sr" style="top:2.6px;transform:scale(0.845,1.0)">226884</span></div><div class="c" style="left:1213.5px;top:281.2px;width:42.0px"><span class="s sr" style="top:2.6px;transform:scale(0.845,1.0)">217158</span></div><div class="c" style="left:28.5px;top:294.5px;width:43.0px"><span class="s sl" style="top:2.6px">81,FlashCurve</span></div><div class="c" style="left:71.5px;top:294.5px;width:84.0px"><span class="s sl" style="left:1px;top:2.6px">Perform Measurement</span></div><div class="c" style="left:155.5px;top:294.5px;width:43.0px"><span class="s sl" style="top:2.6px">24/01/2019</span></div><div class="c" style="left:198.5px;top:294.5px;width:42.0px"><span class="s sr" style="top:2.6px;transform:scale(0.845,1.0)">59</span></div><div class="c" style="left:240.5px;top:294.5px;width:42.0px"><span class="s sl" style="top:2.6px">AGSID0123</span></div><div class="c" style="left:282.5px;top:294.5px;width:43.0px"><span class="s sr" style="top:2.6px;transform:scale(0.875,1.0)">1.81E+09</span></div><div class="c" style="left:325.5px;top:294.5px;width:42.0px"><span class="s sr" style="top:2.6px;transform:scale(0.845,1.0)">4</span></div><div class="c" style="left:367.5px;top:294.5px;width:42.0px"><span class="s sr" style="top:2.6px;transform:scale(0.845,1.0)">480</span></div><div class="c" style="left:409.5px;top:294.5px;width:42.0px"><span class="s sr" style="top:2.6px;transform:scale(0.845,1.0)">173527</span></div><div class="c" style="left:451.5px;top:294.5px;width:43.0px"><span class="s sl" style="top:2.6px">Specimen</span></div><div class="c" style="left:494.5px;top:294.5px;width:42.0px"><span class="s sl" style="top:2.6px">46 87</span></div><div class="c" style="left:536.5px;top:294.5px;width:42.0px"><span class="s sr" style="top:2.6px;transform:scale(0.845,1.0)">8</span></div><div class="c" style="left:578.5px;top:294.5px;width:43.0px"><span class="s sr" style="top:2.6px;transform:scale(0.845,1.0)">8</span></div><div class="c" style="left:621.5px;top:294.5px;width:42.0px"><span class="s sr" style="top:2.6px;transform:scale(0.845,1.0)">311</span></div><div class="c" style="left:663.5px;top:294.5px;width:42.0px"><span class="s sr" style="top:2.6px;transform:scale(0.845,1.0)">5926</span></div><div class="c" style="left:705.5px;top:294.5px;width:43.0px"><span class="s sr" style="top:2.6px;transform:scale(0.845,1.0)">16536</span></div><div class="c" style="left:748.5px;top:294.5px;width:42.0px"><span class="s sr" style="top:2.6px;transform:scale(0.845,1.0)">35979</span></div><div class="c" style="left:790.5px;top:294.5px;width:42.0px"><span class="s sr" style="top:2.6px;transform:scale(0.845,1.0)">62945</span></div><div class="c" style="left:832.5px;top:294.5px;width:43.0px"><span class="s sr" style="top:2.6px;transform:scale(0.845,1.0)">93578</span></div><div class="c" style="left:875.5px;top:294.5px;width:42.0px"><span class="s sr" style="top:2.6px;transform:scale(0.845,1.0)">126807</span></div><div class="c" style="left:917.5px;top:294.5px;width:42.0px"><span class="s sr" style="top:2.6px;transform:scale(0.845,1.0)">164224</span></div><div class="c" style="left:959.5px;top:294.5px;width:43.0px"><span class="s sr" style="top:2.6px;transform:scale(0.845,1.0)">194615</span></div><div class="c" style="left:1002.5px;top:294.5px;width:42.0px"><span class="s sr" style="top:2.6px;transform:scale(0.845,1.0)">218564</span></div><div class="c" style="left:1044.5px;top:294.5px;width:42.0px"><span class="s sr" style="top:2.6px;transform:scale(0.845,1.0)">229451</span></div><div class="c" style="left:1086.5px;top:294.5px;width:42.0px"><span class="s sr" style="top:2.6px;transform:scale(0.845,1.0)">227242</span></div><div class="c" style="left:1128.5px;top:294.5px;width:43.0px"><span class="s sr" style="top:2.6px;transform:scale(0.845,1.0)">223374</span></div><div class="c" style="left:1171.5px;top:294.5px;width:42.0px"><span class="s sr" style="top:2.6px;transform:scale(0.845,1.0)">212365</span></div><div class="c" style="left:1213.5px;top:294.5px;width:42.0px"><span class="s sr" style="top:2.6px;transform:scale(0.845,1.0)">197732</span></div><div class="c" style="left:28.5px;top:307.8px;width:43.0px"><span class="s sl" style="top:2.6px">81,FlashCurve</span></div><div class="c" style="left:71.5px;top:307.8px;width:84.0px"><span class="s sl" style="left:1px;top:2.6px">Perform Measurement</span></div><div class="c" style="left:155.5px;top:307.8px;width:43.0px"><span class="s sl" style="top:2.6px">24/01/2019</span></div><div class="c" style="left:198.5px;top:307.8px;width:42.0px"><span class="s sr" style="top:2.6px;transform:scale(0.845,1.0)">42</span></div><div class="c" style="left:240.5px;top:307.8px;width:42.0px"><span class="s sl" style="top:2.6px">AGSID0123</span></div><div class="c" style="left:282.5px;top:307.8px;width:43.0px"><span class="s sr" style="top:2.6px;transform:scale(0.875,1.0)">1.81E+09</span></div><div class="c" style="left:325.5px;top:307.8px;width:42.0px"><span class="s sr" style="top:2.6px;transform:scale(0.845,1.0)">0</span></div><div class="c" style="left:367.5px;top:307.8px;width:42.0px"><span class="s sr" style="top:2.6px;transform:scale(0.845,1.0)">464</span></div><div class="c" style="left:409.5px;top:307.8px;width:42.0px"><span class="s sr" style="top:2.6px;transform:scale(0.845,1.0)">173527</span></div><div class="c" style="left:451.5px;top:307.8px;width:43.0px"><span class="s sl" style="top:2.6px">Specimen</span></div><div class="c" style="left:494.5px;top:307.8px;width:42.0px"><span class="s sl" style="top:2.6px">46 87</span></div><div class="c" style="left:536.5px;top:307.8px;width:42.0px"><span class="s sr" style="top:2.6px;transform:scale(0.845,1.0)">8</span></div><div class="c" style="left:578.5px;top:307.8px;width:43.0px"><span class="s sr" style="top:2.6px;transform:scale(0.845,1.0)">8</span></div><div class="c" style="left:621.5px;top:307.8px;width:42.0px"><span class="s sr" style="top:2.6px;transform:scale(0.845,1.0)">564</span></div><div class="c" style="left:663.5px;top:307.8px;width:42.0px"><span class="s sr" style="top:2.6px;transform:scale(0.845,1.0)">8358</span></div><div class="c" style="left:705.5px;top:307.8px;width:43.0px"><span class="s sr" style="top:2.6px;transform:scale(0.845,1.0)">21636</span></div><div class="c" style="left:748.5px;top:307.8px;width:42.0px"><span class="s sr" style="top:2.6px;transform:scale(0.845,1.0)">34833</span></div><div class="c" style="left:790.5px;top:307.8px;width:42.0px"><span class="s sr" style="top:2.6px;transform:scale(0.845,1.0)">52261</span></div><div class="c" style="left:832.5px;top:307.8px;width:43.0px"><span class="s sr" style="top:2.6px;transform:scale(0.845,1.0)">82870</span></div><div class="c" style="left:875.5px;top:307.8px;width:42.0px"><span class="s sr" style="top:2.6px;transform:scale(0.845,1.0)">119472</span></div><div class="c" style="left:917.5px;top:307.8px;width:42.0px"><span class="s sr" style="top:2.6px;transform:scale(0.845,1.0)">156532</span></div><div class="c" style="left:959.5px;top:307.8px;width:43.0px"><span class="s sr" style="top:2.6px;transform:scale(0.845,1.0)">189560</span></div><div class="c" style="left:1002.5px;top:307.8px;width:42.0px"><span class="s sr" style="top:2.6px;transform:scale(0.845,1.0)">216137</span></div><div class="c" style="left:1044.5px;top:307.8px;width:42.0px"><span class="s sr" style="top:2.6px;transform:scale(0.845,1.0)">236593</span></div><div class="c" style="left:1086.5px;top:307.8px;width:42.0px"><span class="s sr" style="top:2.6px;transform:scale(0.845,1.0)">248685</span></div><div class="c" style="left:1128.5px;top:307.8px;width:43.0px"><span class="s sr" style="top:2.6px;transform:scale(0.845,1.0)">246589</span></div><div class="c" style="left:1171.5px;top:307.8px;width:42.0px"><span class="s sr" style="top:2.6px;transform:scale(0.845,1.0)">235300</span></div><div class="c" style="left:1213.5px;top:307.8px;width:42.0px"><span class="s sr" style="top:2.6px;transform:scale(0.845,1.0)">222475</span></div><div class="c" style="left:28.5px;top:321.0px;width:43.0px"><span class="s sl" style="top:2.6px">81,FlashCurve</span></div><div class="c" style="left:71.5px;top:321.0px;width:84.0px"><span class="s sl" style="left:1px;top:2.6px">Perform Measurement</span></div><div class="c" style="left:155.5px;top:321.0px;width:43.0px"><span class="s sl" style="top:2.6px">24/01/2019</span></div><div class="c" style="left:198.5px;top:321.0px;width:42.0px"><span class="s sr" style="top:2.6px;transform:scale(0.845,1.0)">46</span></div><div class="c" style="left:240.5px;top:321.0px;width:42.0px"><span class="s sl" style="top:2.6px">AGSID0123</span></div><div class="c" style="left:282.5px;top:321.0px;width:43.0px"><span class="s sr" style="top:2.6px;transform:scale(0.875,1.0)">1.81E+09</span></div><div class="c" style="left:325.5px;top:321.0px;width:42.0px"><span class="s sr" style="top:2.6px;transform:scale(0.845,1.0)">1</span></div><div class="c" style="left:367.5px;top:321.0px;width:42.0px"><span class="s sr" style="top:2.6px;transform:scale(0.845,1.0)">504</span></div><div class="c" style="left:409.5px;top:321.0px;width:42.0px"><span class="s sr" style="top:2.6px;transform:scale(0.845,1.0)">173527</span></div><div class="c" style="left:451.5px;top:321.0px;width:43.0px"><span class="s sl" style="top:2.6px">Specimen</span></div><div class="c" style="left:494.5px;top:321.0px;width:42.0px"><span class="s sl" style="top:2.6px">46 87</span></div><div class="c" style="left:536.5px;top:321.0px;width:42.0px"><span class="s sr" style="top:2.6px;transform:scale(0.845,1.0)">8</span></div><div class="c" style="left:578.5px;top:321.0px;width:43.0px"><span class="s sr" style="top:2.6px;transform:scale(0.845,1.0)">8</span></div><div class="c" style="left:621.5px;top:321.0px;width:42.0px"><span class="s sr" style="top:2.6px;transform:scale(0.845,1.0)">409</span></div><div class="c" style="left:663.5px;top:321.0px;width:42.0px"><span class="s sr" style="top:2.6px;transform:scale(0.845,1.0)">6581</span></div><div class="c" style="left:705.5px;top:321.0px;width:43.0px"><span class="s sr" style="top:2.6px;transform:scale(0.845,1.0)">20948</span></div><div class="c" style="left:748.5px;top:321.0px;width:42.0px"><span class="s sr" style="top:2.6px;transform:scale(0.845,1.0)">42241</span></div><div class="c" style="left:790.5px;top:321.0px;width:42.0px"><span class="s sr" style="top:2.6px;transform:scale(0.845,1.0)">72146</span></div><div class="c" style="left:832.5px;top:321.0px;width:43.0px"><span class="s sr" style="top:2.6px;transform:scale(0.845,1.0)">107119</span></div><div class="c" style="left:875.5px;top:321.0px;width:42.0px"><span class="s sr" style="top:2.6px;transform:scale(0.845,1.0)">145139</span></div><div class="c" style="left:917.5px;top:321.0px;width:42.0px"><span class="s sr" style="top:2.6px;transform:scale(0.845,1.0)">181292</span></div><div class="c" style="left:959.5px;top:321.0px;width:43.0px"><span class="s sr" style="top:2.6px;transform:scale(0.845,1.0)">212164</span></div><div class="c" style="left:1002.5px;top:321.0px;width:42.0px"><span class="s sr" style="top:2.6px;transform:scale(0.845,1.0)">231101</span></div><div class="c" style="left:1044.5px;top:321.0px;width:42.0px"><span class="s sr" style="top:2.6px;transform:scale(0.845,1.0)">232376</span></div><div class="c" style="left:1086.5px;top:321.0px;width:42.0px"><span class="s sr" style="top:2.6px;transform:scale(0.845,1.0)">232026</span></div><div class="c" style="left:1128.5px;top:321.0px;width:43.0px"><span class="s sr" style="top:2.6px;transform:scale(0.845,1.0)">227644</span></div><div class="c" style="left:1171.5px;top:321.0px;width:42.0px"><span class="s sr" style="top:2.6px;transform:scale(0.845,1.0)">223505</span></div><div class="c" style="left:1213.5px;top:321.0px;width:42.0px"><span class="s sr" style="top:2.6px;transform:scale(0.845,1.0)">213369</span></div><div class="c" style="left:28.5px;top:334.3px;width:43.0px"><span class="s sl" style="top:2.6px">81,FlashCurve</span></div><div class="c" style="left:71.5px;top:334.3px;width:84.0px"><span class="s sl" style="left:1px;top:2.6px">Perform Measurement</span></div><div class="c" style="left:155.5px;top:334.3px;width:43.0px"><span class="s sl" style="top:2.6px">24/01/2019</span></div><div class="c" style="left:198.5px;top:334.3px;width:42.0px"><span class="s sr" style="top:2.6px;transform:scale(0.845,1.0)">50</span></div><div class="c" style="left:240.5px;top:334.3px;width:42.0px"><span class="s sl" style="top:2.6px">AGSID0123</span></div><div class="c" style="left:282.5px;top:334.3px;width:43.0px"><span class="s sr" style="top:2.6px;transform:scale(0.875,1.0)">1.81E+09</span></div><div class="c" style="left:325.5px;top:334.3px;width:42.0px"><span class="s sr" style="top:2.6px;transform:scale(0.845,1.0)">2</span></div><div class="c" style="left:367.5px;top:334.3px;width:42.0px"><span class="s sr" style="top:2.6px;transform:scale(0.845,1.0)">480</span></div><div class="c" style="left:409.5px;top:334.3px;width:42.0px"><span class="s sr" style="top:2.6px;transform:scale(0.845,1.0)">173527</span></div><div class="c" style="left:451.5px;top:334.3px;width:43.0px"><span class="s sl" style="top:2.6px">Specimen</span></div><div class="c" style="left:494.5px;top:334.3px;width:42.0px"><span class="s sl" style="top:2.6px">46 87</span></div><div class="c" style="left:536.5px;top:334.3px;width:42.0px"><span class="s sr" style="top:2.6px;transform:scale(0.845,1.0)">16</span></div><div class="c" style="left:578.5px;top:334.3px;width:43.0px"><span class="s sr" style="top:2.6px;transform:scale(0.845,1.0)">8</span></div><div class="c" style="left:621.5px;top:334.3px;width:42.0px"><span class="s sr" style="top:2.6px;transform:scale(0.845,1.0)">384</span></div><div class="c" style="left:663.5px;top:334.3px;width:42.0px"><span class="s sr" style="top:2.6px;transform:scale(0.845,1.0)">6074</span></div><div class="c" style="left:705.5px;top:334.3px;width:43.0px"><span class="s sr" style="top:2.6px;transform:scale(0.845,1.0)">16495</span></div><div class="c" style="left:748.5px;top:334.3px;width:42.0px"><span class="s sr" style="top:2.6px;transform:scale(0.845,1.0)">32328</span></div><div class="c" style="left:790.5px;top:334.3px;width:42.0px"><span class="s sr" style="top:2.6px;transform:scale(0.845,1.0)">55094</span></div><div class="c" style="left:832.5px;top:334.3px;width:43.0px"><span class="s sr" style="top:2.6px;transform:scale(0.845,1.0)">82461</span></div><div class="c" style="left:875.5px;top:334.3px;width:42.0px"><span class="s sr" style="top:2.6px;transform:scale(0.845,1.0)">112808</span></div><div class="c" style="left:917.5px;top:334.3px;width:42.0px"><span class="s sr" style="top:2.6px;transform:scale(0.845,1.0)">146116</span></div><div class="c" style="left:959.5px;top:334.3px;width:43.0px"><span class="s sr" style="top:2.6px;transform:scale(0.845,1.0)">179747</span></div><div class="c" style="left:1002.5px;top:334.3px;width:42.0px"><span class="s sr" style="top:2.6px;transform:scale(0.845,1.0)">206245</span></div><div class="c" style="left:1044.5px;top:334.3px;width:42.0px"><span class="s sr" style="top:2.6px;transform:scale(0.845,1.0)">228063</span></div><div class="c" style="left:1086.5px;top:334.3px;width:42.0px"><span class="s sr" style="top:2.6px;transform:scale(0.845,1.0)">239308</span></div><div class="c" style="left:1128.5px;top:334.3px;width:43.0px"><span class="s sr" style="top:2.6px;transform:scale(0.845,1.0)">240914</span></div><div class="c" style="left:1171.5px;top:334.3px;width:42.0px"><span class="s sr" style="top:2.6px;transform:scale(0.845,1.0)">236226</span></div><div class="c" style="left:1213.5px;top:334.3px;width:42.0px"><span class="s sr" style="top:2.6px;transform:scale(0.845,1.0)">227539</span></div><div class="c" style="left:28.5px;top:347.6px;width:43.0px"><span class="s sl" style="top:2.6px">81,FlashCurve</span></div><div class="c" style="left:71.5px;top:347.6px;width:84.0px"><span class="s sl" style="left:1px;top:2.6px">Perform Measurement</span></div><div class="c" style="left:155.5px;top:347.6px;width:43.0px"><span class="s sl" style="top:2.6px">24/01/2019</span></div><div class="c" style="left:198.5px;top:347.6px;width:42.0px"><span class="s sr" style="top:2.6px;transform:scale(0.845,1.0)">54</span></div><div class="c" style="left:240.5px;top:347.6px;width:42.0px"><span class="s sl" style="top:2.6px">AGSID0123</span></div><div class="c" style="left:282.5px;top:347.6px;width:43.0px"><span class="s sr" style="top:2.6px;transform:scale(0.875,1.0)">1.81E+09</span></div><div class="c" style="left:325.5px;top:347.6px;width:42.0px"><span class="s sr" style="top:2.6px;transform:scale(0.845,1.0)">3</span></div><div class="c" style="left:367.5px;top:347.6px;width:42.0px"><span class="s sr" style="top:2.6px;transform:scale(0.845,1.0)">448</span></div><div class="c" style="left:409.5px;top:347.6px;width:42.0px"><span class="s sr" style="top:2.6px;transform:scale(0.845,1.0)">173527</span></div><div class="c" style="left:451.5px;top:347.6px;width:43.0px"><span class="s sl" style="top:2.6px">Specimen</span></div><div class="c" style="left:494.5px;top:347.6px;width:42.0px"><span class="s sl" style="top:2.6px">46 87</span></div><div class="c" style="left:536.5px;top:347.6px;width:42.0px"><span class="s sr" style="top:2.6px;transform:scale(0.845,1.0)">0</span></div><div class="c" style="left:578.5px;top:347.6px;width:43.0px"><span class="s sr" style="top:2.6px;transform:scale(0.845,1.0)">8</span></div><div class="c" style="left:621.5px;top:347.6px;width:42.0px"><span class="s sr" style="top:2.6px;transform:scale(0.845,1.0)">515</span></div><div class="c" style="left:663.5px;top:347.6px;width:42.0px"><span class="s sr" style="top:2.6px;transform:scale(0.845,1.0)">6385</span></div><div class="c" style="left:705.5px;top:347.6px;width:43.0px"><span class="s sr" style="top:2.6px;transform:scale(0.845,1.0)">20801</span></div><div class="c" style="left:748.5px;top:347.6px;width:42.0px"><span class="s sr" style="top:2.6px;transform:scale(0.845,1.0)">43240</span></div><div class="c" style="left:790.5px;top:347.6px;width:42.0px"><span class="s sr" style="top:2.6px;transform:scale(0.845,1.0)">70714</span></div><div class="c" style="left:832.5px;top:347.6px;width:43.0px"><span class="s sr" style="top:2.6px;transform:scale(0.845,1.0)">102673</span></div><div class="c" style="left:875.5px;top:347.6px;width:42.0px"><span class="s sr" style="top:2.6px;transform:scale(0.845,1.0)">139595</span></div><div class="c" style="left:917.5px;top:347.6px;width:42.0px"><span class="s sr" style="top:2.6px;transform:scale(0.845,1.0)">177110</span></div><div class="c" style="left:959.5px;top:347.6px;width:43.0px"><span class="s sr" style="top:2.6px;transform:scale(0.845,1.0)">206271</span></div><div class="c" style="left:1002.5px;top:347.6px;width:42.0px"><span class="s sr" style="top:2.6px;transform:scale(0.845,1.0)">224151</span></div><div class="c" style="left:1044.5px;top:347.6px;width:42.0px"><span class="s sr" style="top:2.6px;transform:scale(0.845,1.0)">230595</span></div><div class="c" style="left:1086.5px;top:347.6px;width:42.0px"><span class="s sr" style="top:2.6px;transform:scale(0.845,1.0)">225077</span></div><div class="c" style="left:1128.5px;top:347.6px;width:43.0px"><span class="s sr" style="top:2.6px;transform:scale(0.845,1.0)">215683</span></div><div class="c" style="left:1171.5px;top:347.6px;width:42.0px"><span class="s sr" style="top:2.6px;transform:scale(0.845,1.0)">204778</span></div><div class="c" style="left:1213.5px;top:347.6px;width:42.0px"><span class="s sr" style="top:2.6px;transform:scale(0.845,1.0)">197453</span></div><div class="c" style="left:28.5px;top:360.9px;width:43.0px"><span class="s sl" style="top:2.6px">81,FlashCurve</span></div><div class="c" style="left:71.5px;top:360.9px;width:84.0px"><span class="s sl" style="left:1px;top:2.6px">Perform Measurement</span></div><div class="c" style="left:155.5px;top:360.9px;width:43.0px"><span class="s sl" style="top:2.6px">24/01/2019</span></div><div class="c" style="left:198.5px;top:360.9px;width:42.0px"><span class="s sr" style="top:2.6px;transform:scale(0.845,1.0)">57</span></div><div class="c" style="left:240.5px;top:360.9px;width:42.0px"><span class="s sl" style="top:2.6px">AGSID0123</span></div><div class="c" style="left:282.5px;top:360.9px;width:43.0px"><span class="s sr" style="top:2.6px;transform:scale(0.875,1.0)">1.81E+09</span></div><div class="c" style="left:325.5px;top:360.9px;width:42.0px"><span class="s sr" style="top:2.6px;transform:scale(0.845,1.0)">4</span></div><div class="c" style="left:367.5px;top:360.9px;width:42.0px"><span class="s sr" style="top:2.6px;transform:scale(0.845,1.0)">456</span></div><div class="c" style="left:409.5px;top:360.9px;width:42.0px"><span class="s sr" style="top:2.6px;transform:scale(0.845,1.0)">173527</span></div><div class="c" style="left:451.5px;top:360.9px;width:43.0px"><span class="s sl" style="top:2.6px">Specimen</span></div><div class="c" style="left:494.5px;top:360.9px;width:42.0px"><span class="s sl" style="top:2.6px">46 87</span></div><div class="c" style="left:536.5px;top:360.9px;width:42.0px"><span class="s sr" style="top:2.6px;transform:scale(0.845,1.0)">8</span></div><div class="c" style="left:578.5px;top:360.9px;width:43.0px"><span class="s sr" style="top:2.6px;transform:scale(0.845,1.0)">8</span></div><div class="c" style="left:621.5px;top:360.9px;width:42.0px"><span class="s sr" style="top:2.6px;transform:scale(0.845,1.0)">302</span></div><div class="c" style="left:663.5px;top:360.9px;width:42.0px"><span class="s sr" style="top:2.6px;transform:scale(0.845,1.0)">5959</span></div><div class="c" style="left:705.5px;top:360.9px;width:43.0px"><span class="s sr" style="top:2.6px;transform:scale(0.845,1.0)">19761</span></div><div class="c" style="left:748.5px;top:360.9px;width:42.0px"><span class="s sr" style="top:2.6px;transform:scale(0.845,1.0)">40751</span></div><div class="c" style="left:790.5px;top:360.9px;width:42.0px"><span class="s sr" style="top:2.6px;transform:scale(0.845,1.0)">69674</span></div><div class="c" style="left:832.5px;top:360.9px;width:43.0px"><span class="s sr" style="top:2.6px;transform:scale(0.845,1.0)">102469</span></div><div class="c" style="left:875.5px;top:360.9px;width:42.0px"><span class="s sr" style="top:2.6px;transform:scale(0.845,1.0)">138267</span></div><div class="c" style="left:917.5px;top:360.9px;width:42.0px"><span class="s sr" style="top:2.6px;transform:scale(0.845,1.0)">176534</span></div><div class="c" style="left:959.5px;top:360.9px;width:43.0px"><span class="s sr" style="top:2.6px;transform:scale(0.845,1.0)">207511</span></div><div class="c" style="left:1002.5px;top:360.9px;width:42.0px"><span class="s sr" style="top:2.6px;transform:scale(0.845,1.0)">227958</span></div><div class="c" style="left:1044.5px;top:360.9px;width:42.0px"><span class="s sr" style="top:2.6px;transform:scale(0.845,1.0)">238810</span></div><div class="c" style="left:1086.5px;top:360.9px;width:42.0px"><span class="s sr" style="top:2.6px;transform:scale(0.845,1.0)">232978</span></div><div class="c" style="left:1128.5px;top:360.9px;width:43.0px"><span class="s sr" style="top:2.6px;transform:scale(0.845,1.0)">222588</span></div><div class="c" style="left:1171.5px;top:360.9px;width:42.0px"><span class="s sr" style="top:2.6px;transform:scale(0.845,1.0)">209772</span></div><div class="c" style="left:1213.5px;top:360.9px;width:42.0px"><span class="s sr" style="top:2.6px;transform:scale(0.845,1.0)">198326</span></div><div class="c" style="left:28.5px;top:374.1px;width:43.0px"><span class="s sl" style="top:2.6px">81,FlashCurve</span></div><div class="c" style="left:71.5px;top:374.1px;width:84.0px"><span class="s sl" style="left:1px;top:2.6px">Perform Measurement</span></div><div class="c" style="left:155.5px;top:374.1px;width:43.0px"><span class="s sl" style="top:2.6px">24/01/2019</span></div><div class="c" style="left:198.5px;top:374.1px;width:42.0px"><span class="s sr" style="top:2.6px;transform:scale(0.845,1.0)">47</span></div><div class="c" style="left:240.5px;top:374.1px;width:42.0px"><span class="s sl" style="top:2.6px">AGSID0123</span></div><div class="c" style="left:282.5px;top:374.1px;width:43.0px"><span class="s sr" style="top:2.6px;transform:scale(0.875,1.0)">1.81E+09</span></div><div class="c" style="left:325.5px;top:374.1px;width:42.0px"><span class="s sr" style="top:2.6px;transform:scale(0.845,1.0)">0</span></div><div class="c" style="left:367.5px;top:374.1px;width:42.0px"><span class="s sr" style="top:2.6px;transform:scale(0.845,1.0)">472</span></div><div class="c" style="left:409.5px;top:374.1px;width:42.0px"><span class="s sr" style="top:2.6px;transform:scale(0.845,1.0)">173527</span></div><div class="c" style="left:451.5px;top:374.1px;width:43.0px"><span class="s sl" style="top:2.6px">Specimen</span></div><div class="c" style="left:494.5px;top:374.1px;width:42.0px"><span class="s sl" style="top:2.6px">46 87</span></div><div class="c" style="left:536.5px;top:374.1px;width:42.0px"><span class="s sr" style="top:2.6px;transform:scale(0.845,1.0)">16</span></div><div class="c" style="left:578.5px;top:374.1px;width:43.0px"><span class="s sr" style="top:2.6px;transform:scale(0.845,1.0)">16</span></div><div class="c" style="left:621.5px;top:374.1px;width:42.0px"><span class="s sr" style="top:2.6px;transform:scale(0.845,1.0)">687</span></div><div class="c" style="left:663.5px;top:374.1px;width:42.0px"><span class="s sr" style="top:2.6px;transform:scale(0.845,1.0)">8571</span></div><div class="c" style="left:705.5px;top:374.1px;width:43.0px"><span class="s sr" style="top:2.6px;transform:scale(0.845,1.0)">22700</span></div><div class="c" style="left:748.5px;top:374.1px;width:42.0px"><span class="s sr" style="top:2.6px;transform:scale(0.845,1.0)">43256</span></div><div class="c" style="left:790.5px;top:374.1px;width:42.0px"><span class="s sr" style="top:2.6px;transform:scale(0.845,1.0)">74348</span></div><div class="c" style="left:832.5px;top:374.1px;width:43.0px"><span class="s sr" style="top:2.6px;transform:scale(0.845,1.0)">109493</span></div><div class="c" style="left:875.5px;top:374.1px;width:42.0px"><span class="s sr" style="top:2.6px;transform:scale(0.845,1.0)">147243</span></div><div class="c" style="left:917.5px;top:374.1px;width:42.0px"><span class="s sr" style="top:2.6px;transform:scale(0.845,1.0)">185003</span></div><div class="c" style="left:959.5px;top:374.1px;width:43.0px"><span class="s sr" style="top:2.6px;transform:scale(0.845,1.0)">217804</span></div><div class="c" style="left:1002.5px;top:374.1px;width:42.0px"><span class="s sr" style="top:2.6px;transform:scale(0.845,1.0)">238321</span></div><div class="c" style="left:1044.5px;top:374.1px;width:42.0px"><span class="s sr" style="top:2.6px;transform:scale(0.845,1.0)">245480</span></div><div class="c" style="left:1086.5px;top:374.1px;width:42.0px"><span class="s sr" style="top:2.6px;transform:scale(0.845,1.0)">241892</span></div><div class="c" style="left:1128.5px;top:374.1px;width:43.0px"><span class="s sr" style="top:2.6px;transform:scale(0.845,1.0)">235842</span></div><div class="c" style="left:1171.5px;top:374.1px;width:42.0px"><span class="s sr" style="top:2.6px;transform:scale(0.845,1.0)">229983</span></div><div class="c" style="left:1213.5px;top:374.1px;width:42.0px"><span class="s sr" style="top:2.6px;transform:scale(0.845,1.0)">220834</span></div><div class="c" style="left:28.5px;top:387.4px;width:43.0px"><span class="s sl" style="top:2.6px">81,FlashCurve</span></div><div class="c" style="left:71.5px;top:387.4px;width:84.0px"><span class="s sl" style="left:1px;top:2.6px">Perform Measurement</span></div><div class="c" style="left:155.5px;top:387.4px;width:43.0px"><span class="s sl" style="top:2.6px">24/01/2019</span></div><div class="c" style="left:198.5px;top:387.4px;width:42.0px"><span class="s sr" style="top:2.6px;transform:scale(0.845,1.0)">48</span></div><div class="c" style="left:240.5px;top:387.4px;width:42.0px"><span class="s sl" style="top:2.6px">AGSID0123</span></div><div class="c" style="left:282.5px;top:387.4px;width:43.0px"><span class="s sr" style="top:2.6px;transform:scale(0.875,1.0)">1.81E+09</span></div><div class="c" style="left:325.5px;top:387.4px;width:42.0px"><span class="s sr" style="top:2.6px;transform:scale(0.845,1.0)">1</span></div><div class="c" style="left:367.5px;top:387.4px;width:42.0px"><span class="s sr" style="top:2.6px;transform:scale(0.845,1.0)">504</span></div><div class="c" style="left:409.5px;top:387.4px;width:42.0px"><span class="s sr" style="top:2.6px;transform:scale(0.845,1.0)">173527</span></div><div class="c" style="left:451.5px;top:387.4px;width:43.0px"><span class="s sl" style="top:2.6px">Specimen</span></div><div class="c" style="left:494.5px;top:387.4px;width:42.0px"><span class="s sl" style="top:2.6px">46 87</span></div><div class="c" style="left:536.5px;top:387.4px;width:42.0px"><span class="s sr" style="top:2.6px;transform:scale(0.845,1.0)">8</span></div><div class="c" style="left:578.5px;top:387.4px;width:43.0px"><span class="s sr" style="top:2.6px;transform:scale(0.845,1.0)">8</span></div><div class="c" style="left:621.5px;top:387.4px;width:42.0px"><span class="s sr" style="top:2.6px;transform:scale(0.845,1.0)">376</span></div><div class="c" style="left:663.5px;top:387.4px;width:42.0px"><span class="s sr" style="top:2.6px;transform:scale(0.845,1.0)">6786</span></div><div class="c" style="left:705.5px;top:387.4px;width:43.0px"><span class="s sr" style="top:2.6px;transform:scale(0.845,1.0)">23273</span></div><div class="c" style="left:748.5px;top:387.4px;width:42.0px"><span class="s sr" style="top:2.6px;transform:scale(0.845,1.0)">50338</span></div><div class="c" style="left:790.5px;top:387.4px;width:42.0px"><span class="s sr" style="top:2.6px;transform:scale(0.845,1.0)">84499</span></div><div class="c" style="left:832.5px;top:387.4px;width:43.0px"><span class="s sr" style="top:2.6px;transform:scale(0.845,1.0)">117163</span></div><div class="c" style="left:875.5px;top:387.4px;width:42.0px"><span class="s sr" style="top:2.6px;transform:scale(0.845,1.0)">152830</span></div><div class="c" style="left:917.5px;top:387.4px;width:42.0px"><span class="s sr" style="top:2.6px;transform:scale(0.845,1.0)">184086</span></div><div class="c" style="left:959.5px;top:387.4px;width:43.0px"><span class="s sr" style="top:2.6px;transform:scale(0.845,1.0)">210881</span></div><div class="c" style="left:1002.5px;top:387.4px;width:42.0px"><span class="s sr" style="top:2.6px;transform:scale(0.845,1.0)">229756</span></div><div class="c" style="left:1044.5px;top:387.4px;width:42.0px"><span class="s sr" style="top:2.6px;transform:scale(0.845,1.0)">236636</span></div><div class="c" style="left:1086.5px;top:387.4px;width:42.0px"><span class="s sr" style="top:2.6px;transform:scale(0.845,1.0)">238574</span></div><div class="c" style="left:1128.5px;top:387.4px;width:43.0px"><span class="s sr" style="top:2.6px;transform:scale(0.845,1.0)">233388</span></div><div class="c" style="left:1171.5px;top:387.4px;width:42.0px"><span class="s sr" style="top:2.6px;transform:scale(0.845,1.0)">224527</span></div><div class="c" style="left:1213.5px;top:387.4px;width:42.0px"><span class="s sr" style="top:2.6px;transform:scale(0.845,1.0)">212085</span></div><div class="c" style="left:28.5px;top:400.7px;width:43.0px"><span class="s sl" style="top:2.6px">81,FlashCurve</span></div><div class="c" style="left:71.5px;top:400.7px;width:84.0px"><span class="s sl" style="left:1px;top:2.6px">Perform Measurement</span></div><div class="c" style="left:155.5px;top:400.7px;width:43.0px"><span class="s sl" style="top:2.6px">24/01/2019</span></div><div class="c" style="left:198.5px;top:400.7px;width:42.0px"><span class="s sr" style="top:2.6px;transform:scale(0.845,1.0)">53</span></div><div class="c" style="left:240.5px;top:400.7px;width:42.0px"><span class="s sl" style="top:2.6px">AGSID0123</span></div><div class="c" style="left:282.5px;top:400.7px;width:43.0px"><span class="s sr" style="top:2.6px;transform:scale(0.875,1.0)">1.81E+09</span></div><div class="c" style="left:325.5px;top:400.7px;width:42.0px"><span class="s sr" style="top:2.6px;transform:scale(0.845,1.0)">2</span></div><div class="c" style="left:367.5px;top:400.7px;width:42.0px"><span class="s sr" style="top:2.6px;transform:scale(0.845,1.0)">456</span></div><div class="c" style="left:409.5px;top:400.7px;width:42.0px"><span class="s sr" style="top:2.6px;transform:scale(0.845,1.0)">173527</span></div><div class="c" style="left:451.5px;top:400.7px;width:43.0px"><span class="s sl" style="top:2.6px">Specimen</span></div><div class="c" style="left:494.5px;top:400.7px;width:42.0px"><span class="s sl" style="top:2.6px">46 87</span></div><div class="c" style="left:536.5px;top:400.7px;width:42.0px"><span class="s sr" style="top:2.6px;transform:scale(0.845,1.0)">0</span></div><div class="c" style="left:578.5px;top:400.7px;width:43.0px"><span class="s sr" style="top:2.6px;transform:scale(0.845,1.0)">8</span></div><div class="c" style="left:621.5px;top:400.7px;width:42.0px"><span class="s sr" style="top:2.6px;transform:scale(0.845,1.0)">376</span></div><div class="c" style="left:663.5px;top:400.7px;width:42.0px"><span class="s sr" style="top:2.6px;transform:scale(0.845,1.0)">5591</span></div><div class="c" style="left:705.5px;top:400.7px;width:43.0px"><span class="s sr" style="top:2.6px;transform:scale(0.845,1.0)">16741</span></div><div class="c" style="left:748.5px;top:400.7px;width:42.0px"><span class="s sr" style="top:2.6px;transform:scale(0.845,1.0)">37059</span></div><div class="c" style="left:790.5px;top:400.7px;width:42.0px"><span class="s sr" style="top:2.6px;transform:scale(0.845,1.0)">62896</span></div><div class="c" style="left:832.5px;top:400.7px;width:43.0px"><span class="s sr" style="top:2.6px;transform:scale(0.845,1.0)">90418</span></div><div class="c" style="left:875.5px;top:400.7px;width:42.0px"><span class="s sr" style="top:2.6px;transform:scale(0.845,1.0)">120159</span></div><div class="c" style="left:917.5px;top:400.7px;width:42.0px"><span class="s sr" style="top:2.6px;transform:scale(0.845,1.0)">155851</span></div><div class="c" style="left:959.5px;top:400.7px;width:43.0px"><span class="s sr" style="top:2.6px;transform:scale(0.845,1.0)">189979</span></div><div class="c" style="left:1002.5px;top:400.7px;width:42.0px"><span class="s sr" style="top:2.6px;transform:scale(0.845,1.0)">213692</span></div><div class="c" style="left:1044.5px;top:400.7px;width:42.0px"><span class="s sr" style="top:2.6px;transform:scale(0.845,1.0)">223959</span></div><div class="c" style="left:1086.5px;top:400.7px;width:42.0px"><span class="s sr" style="top:2.6px;transform:scale(0.845,1.0)">227556</span></div><div class="c" style="left:1128.5px;top:400.7px;width:43.0px"><span class="s sr" style="top:2.6px;transform:scale(0.845,1.0)">227286</span></div><div class="c" style="left:1171.5px;top:400.7px;width:42.0px"><span class="s sr" style="top:2.6px;transform:scale(0.845,1.0)">222030</span></div><div class="c" style="left:1213.5px;top:400.7px;width:42.0px"><span class="s sr" style="top:2.6px;transform:scale(0.845,1.0)">214067</span></div><div class="c" style="left:28.5px;top:413.9px;width:43.0px"><span class="s sl" style="top:2.6px">81,FlashCurve</span></div><div class="c" style="left:71.5px;top:413.9px;width:84.0px"><span class="s sl" style="left:1px;top:2.6px">Perform Measurement</span></div><div class="c" style="left:155.5px;top:413.9px;width:43.0px"><span class="s sl" style="top:2.6px">24/01/2019</span></div><div class="c" style="left:198.5px;top:413.9px;width:42.0px"><span class="s sr" style="top:2.6px;transform:scale(0.845,1.0)">56</span></div><div class="c" style="left:240.5px;top:413.9px;width:42.0px"><span class="s sl" style="top:2.6px">AGSID0123</span></div><div class="c" style="left:282.5px;top:413.9px;width:43.0px"><span class="s sr" style="top:2.6px;transform:scale(0.875,1.0)">1.81E+09</span></div><div class="c" style="left:325.5px;top:413.9px;width:42.0px"><span class="s sr" style="top:2.6px;transform:scale(0.845,1.0)">3</span></div><div class="c" style="left:367.5px;top:413.9px;width:42.0px"><span class="s sr" style="top:2.6px;transform:scale(0.845,1.0)">576</span></div><div class="c" style="left:409.5px;top:413.9px;width:42.0px"><span class="s sr" style="top:2.6px;transform:scale(0.845,1.0)">173527</span></div><div class="c" style="left:451.5px;top:413.9px;width:43.0px"><span class="s sl" style="top:2.6px">Specimen</span></div><div class="c" style="left:494.5px;top:413.9px;width:42.0px"><span class="s sl" style="top:2.6px">46 87</span></div><div class="c" style="left:536.5px;top:413.9px;width:42.0px"><span class="s sr" style="top:2.6px;transform:scale(0.845,1.0)">8</span></div><div class="c" style="left:578.5px;top:413.9px;width:43.0px"><span class="s sr" style="top:2.6px;transform:scale(0.845,1.0)">8</span></div><div class="c" style="left:621.5px;top:413.9px;width:42.0px"><span class="s sr" style="top:2.6px;transform:scale(0.845,1.0)">384</span></div><div class="c" style="left:663.5px;top:413.9px;width:42.0px"><span class="s sr" style="top:2.6px;transform:scale(0.845,1.0)">6115</span></div><div class="c" style="left:705.5px;top:413.9px;width:43.0px"><span class="s sr" style="top:2.6px;transform:scale(0.845,1.0)">18525</span></div><div class="c" style="left:748.5px;top:413.9px;width:42.0px"><span class="s sr" style="top:2.6px;transform:scale(0.845,1.0)">34743</span></div><div class="c" style="left:790.5px;top:413.9px;width:42.0px"><span class="s sr" style="top:2.6px;transform:scale(0.845,1.0)">59785</span></div><div class="c" style="left:832.5px;top:413.9px;width:43.0px"><span class="s sr" style="top:2.6px;transform:scale(0.845,1.0)">91327</span></div><div class="c" style="left:875.5px;top:413.9px;width:42.0px"><span class="s sr" style="top:2.6px;transform:scale(0.845,1.0)">121052</span></div><div class="c" style="left:917.5px;top:413.9px;width:42.0px"><span class="s sr" style="top:2.6px;transform:scale(0.845,1.0)">155013</span></div><div class="c" style="left:959.5px;top:413.9px;width:43.0px"><span class="s sr" style="top:2.6px;transform:scale(0.845,1.0)">184662</span></div><div class="c" style="left:1002.5px;top:413.9px;width:42.0px"><span class="s sr" style="top:2.6px;transform:scale(0.845,1.0)">209597</span></div><div class="c" style="left:1044.5px;top:413.9px;width:42.0px"><span class="s sr" style="top:2.6px;transform:scale(0.845,1.0)">222632</span></div><div class="c" style="left:1086.5px;top:413.9px;width:42.0px"><span class="s sr" style="top:2.6px;transform:scale(0.845,1.0)">225216</span></div><div class="c" style="left:1128.5px;top:413.9px;width:43.0px"><span class="s sr" style="top:2.6px;transform:scale(0.845,1.0)">220266</span></div><div class="c" style="left:1171.5px;top:413.9px;width:42.0px"><span class="s sr" style="top:2.6px;transform:scale(0.845,1.0)">209274</span></div><div class="c" style="left:1213.5px;top:413.9px;width:42.0px"><span class="s sr" style="top:2.6px;transform:scale(0.845,1.0)">198762</span></div><div class="c" style="left:28.5px;top:427.2px;width:43.0px"><span class="s sl" style="top:2.6px">81,FlashCurve</span></div><div class="c" style="left:71.5px;top:427.2px;width:84.0px"><span class="s sl" style="left:1px;top:2.6px">Perform Measurement</span></div><div class="c" style="left:155.5px;top:427.2px;width:43.0px"><span class="s sl" style="top:2.6px">24/01/2019</span></div><div class="c" style="left:198.5px;top:427.2px;width:42.0px"><span class="s sr" style="top:2.6px;transform:scale(0.845,1.0)">58</span></div><div class="c" style="left:240.5px;top:427.2px;width:42.0px"><span class="s sl" style="top:2.6px">AGSID0123</span></div><div class="c" style="left:282.5px;top:427.2px;width:43.0px"><span class="s sr" style="top:2.6px;transform:scale(0.875,1.0)">1.81E+09</span></div><div class="c" style="left:325.5px;top:427.2px;width:42.0px"><span class="s sr" style="top:2.6px;transform:scale(0.845,1.0)">4</span></div><div class="c" style="left:367.5px;top:427.2px;width:42.0px"><span class="s sr" style="top:2.6px;transform:scale(0.845,1.0)">496</span></div><div class="c" style="left:409.5px;top:427.2px;width:42.0px"><span class="s sr" style="top:2.6px;transform:scale(0.845,1.0)">173527</span></div><div class="c" style="left:451.5px;top:427.2px;width:43.0px"><span class="s sl" style="top:2.6px">Specimen</span></div><div class="c" style="left:494.5px;top:427.2px;width:42.0px"><span class="s sl" style="top:2.6px">46 87</span></div><div class="c" style="left:536.5px;top:427.2px;width:42.0px"><span class="s sr" style="top:2.6px;transform:scale(0.845,1.0)">8</span></div><div class="c" style="left:578.5px;top:427.2px;width:43.0px"><span class="s sr" style="top:2.6px;transform:scale(0.845,1.0)">8</span></div><div class="c" style="left:621.5px;top:427.2px;width:42.0px"><span class="s sr" style="top:2.6px;transform:scale(0.845,1.0)">343</span></div><div class="c" style="left:663.5px;top:427.2px;width:42.0px"><span class="s sr" style="top:2.6px;transform:scale(0.845,1.0)">5370</span></div><div class="c" style="left:705.5px;top:427.2px;width:43.0px"><span class="s sr" style="top:2.6px;transform:scale(0.845,1.0)">16110</span></div><div class="c" style="left:748.5px;top:427.2px;width:42.0px"><span class="s sr" style="top:2.6px;transform:scale(0.845,1.0)">37387</span></div><div class="c" style="left:790.5px;top:427.2px;width:42.0px"><span class="s sr" style="top:2.6px;transform:scale(0.845,1.0)">67161</span></div><div class="c" style="left:832.5px;top:427.2px;width:43.0px"><span class="s sr" style="top:2.6px;transform:scale(0.845,1.0)">96411</span></div><div class="c" style="left:875.5px;top:427.2px;width:42.0px"><span class="s sr" style="top:2.6px;transform:scale(0.845,1.0)">125653</span></div><div class="c" style="left:917.5px;top:427.2px;width:42.0px"><span class="s sr" style="top:2.6px;transform:scale(0.845,1.0)">159832</span></div><div class="c" style="left:959.5px;top:427.2px;width:43.0px"><span class="s sr" style="top:2.6px;transform:scale(0.845,1.0)">190748</span></div><div class="c" style="left:1002.5px;top:427.2px;width:42.0px"><span class="s sr" style="top:2.6px;transform:scale(0.845,1.0)">214460</span></div><div class="c" style="left:1044.5px;top:427.2px;width:42.0px"><span class="s sr" style="top:2.6px;transform:scale(0.845,1.0)">224815</span></div><div class="c" style="left:1086.5px;top:427.2px;width:42.0px"><span class="s sr" style="top:2.6px;transform:scale(0.845,1.0)">228089</span></div><div class="c" style="left:1128.5px;top:427.2px;width:43.0px"><span class="s sr" style="top:2.6px;transform:scale(0.845,1.0)">224614</span></div><div class="c" style="left:1171.5px;top:427.2px;width:42.0px"><span class="s sr" style="top:2.6px;transform:scale(0.845,1.0)">215054</span></div><div class="c" style="left:1213.5px;top:427.2px;width:42.0px"><span class="s sr" style="top:2.6px;transform:scale(0.845,1.0)">202892</span></div><div class="ab" style="left:536px;top:174px;width:43px;height:266px;border:1.6px solid #217346"></div><div class="ab" style="left:576px;top:437px;width:5px;height:5px;background:#217346;border:1px solid #fff"></div><div class="ab" style="left:1269px;top:150px;width:3px;height:301px;background:#fff;border-left:1px solid #c6c6c6"></div><div class="ab" style="left:1270px;top:150px;width:2px;height:1px;background:#c6c6c6"></div><div class="ab" style="left:1270px;top:160px;width:2px;height:1px;background:#888"></div>
<!-- ===== TITLE BAR ===== -->
<svg class="ab" style="left:960px;top:0" width="312" height="21">
<g fill="none" stroke="#e9e9e9" stroke-width="0.7">
<path d="M0,7 C90,3 190,15 312,5"/>
<path d="M40,20 C130,12 220,20 312,12"/>
<path d="M110,0 C170,10 240,4 312,18"/>
<path d="M180,21 C220,6 260,2 312,1"/>
<path d="M220,0 C250,12 280,18 312,21"/>
<path d="M140,21 C200,14 250,8 312,9"/>
<path d="M20,14 C100,18 200,4 312,15"/>
<path d="M60,3 C150,8 230,16 312,3"/>
<path d="M250,0 C270,8 290,14 312,12"/>
</g></svg>
<div class="t rb" style="left:27px;top:6px;font-size:8.6px;color:#333;letter-spacing:-0.3px">AutoSave</div>
<div class="ab" style="left:65px;top:4px;width:25px;height:11px;border:1px solid #555;border-radius:6px"></div>
<div class="ab" style="left:69px;top:7.5px;width:4px;height:4px;border-radius:50%;background:#333"></div>
<div class="t" style="left:76px;top:6.5px;font-size:6px;color:#444;font-weight:bold;letter-spacing:-0.4px">Off</div>
<svg class="ab" style="left:99px;top:4px" width="13" height="13"><path d="M1.5,1.5 H10 L11.5,3 V11.5 H1.5 Z" fill="#c06ad2" stroke="#a63fbf" stroke-width="1"/><rect x="3.5" y="2" width="6" height="3" fill="#fff"/><rect x="3.5" y="8" width="6" height="3.5" fill="#fff"/></svg>
<svg class="ab" style="left:117px;top:4px" width="20" height="14"><path d="M3,2 V6 H7 M3,6 C5,2 11,2 11,7 C11,10 9,11 7,13" fill="none" stroke="#444" stroke-width="1.1"/><path d="M14,6 h4 l-2,2 z" fill="#444"/></svg>
<svg class="ab" style="left:141px;top:4px" width="20" height="14"><path d="M12,2 V6 H8 M12,6 C10,2 4,2 4,7 C4,10 6,11 8,13" fill="none" stroke="#c8c8c8" stroke-width="1.1"/><path d="M15,6 h4 l-2,2 z" fill="#c8c8c8"/></svg>
<svg class="ab" style="left:167px;top:6px" width="8" height="8"><rect x="1" y="1" width="5" height="1" fill="#555"/><path d="M1,4 h5 l-2.5,3 z" fill="#555"/></svg>
<div class="t rb" style="left:575.5px;top:6px;font-size:8.6px;color:#333;letter-spacing:-0.1px;transform:scaleX(0.86);transform-origin:0 0">FlashCurve_2019_01_23_16-31-48&nbsp; -&nbsp; Excel</div>
<div class="t rb" style="left:1098px;top:6px;font-size:8.4px;color:#333;letter-spacing:-0.2px">Bhasker, Vikram</div>
<svg class="ab" style="left:1160px;top:0px" width="112" height="21">
<rect x="10.5" y="6.5" width="8" height="6" fill="none" stroke="#707070" stroke-width="1"/><path d="M14.5,11.5 V8.5 M13,10 L14.5,8.3 L16,10" fill="none" stroke="#707070" stroke-width="0.9"/>
<path d="M42,9.5 H48.5" stroke="#a0a0a0" stroke-width="1"/>
<rect x="72.5" y="7.5" width="5" height="5" fill="none" stroke="#808080"/><path d="M74,7.5 V6.5 H79 V11.5 H77.5" fill="none" stroke="#808080" stroke-width="0.9"/>
<path d="M103,6.5 L109.5,13 M109.5,6.5 L103,13" stroke="#707070" stroke-width="0.9"/>
</svg>
<div class="ab" style="left:12px;top:21px;width:1260px;height:1px;background:#e6e6e6"></div>

<!-- ===== TABS ===== -->
<div class="ab" style="left:12px;top:21px;width:39px;height:20px;background:#217346"></div>
<div class="t" style="left:31.5px;top:27.5px;font-size:8.8px;color:#fff;transform:translateX(-50%)">File</div>
<div class="t tab" style="left:61px">Home</div>
<div class="t tab" style="left:103.5px;letter-spacing:-0.45px">HOLX MACROS</div>
<div class="t tab" style="left:181.5px">Insert</div>
<div class="t tab" style="left:223.5px">Page Layout</div>
<div class="t tab" style="left:290.5px">Formulas</div>
<div class="t tab" style="left:344.5px;color:#222">Data</div>
<div class="ab" style="left:344px;top:38px;width:19px;height:2px;background:#217346"></div>
<div class="t tab" style="left:381.5px">Review</div>
<div class="t tab" style="left:426.5px">View</div>
<div class="t tab" style="left:462.5px">Help</div>
<div class="t tab" style="left:499px">JMP</div>
<div class="t tab" style="left:534px">Acrobat</div>
<svg class="ab" style="left:583px;top:25px" width="13" height="13"><circle cx="7.5" cy="5.5" r="3.8" fill="none" stroke="#444" stroke-width="1"/><path d="M4.8,8.2 L1,12" stroke="#444" stroke-width="1.2"/></svg>
<div class="t tab" style="left:602px">Tell me what you want to do</div>
<div class="ab" style="left:1158px;top:23.5px;width:44px;height:16px;border:1px solid #c5dccd;border-radius:1px"></div>
<svg class="ab" style="left:1163px;top:26px" width="11" height="10"><path d="M1.5,4 V9 H9 V6" fill="none" stroke="#217346" stroke-width="1"/><path d="M4,7 C4,4 6,3 9,3 M7,1 L9.5,3 L7,5" fill="none" stroke="#217346" stroke-width="1"/></svg>
<div class="t" style="left:1174px;top:27.5px;font-size:9px;color:#217346;letter-spacing:-0.1px">Share</div>
<div class="ab" style="left:1208px;top:23.5px;width:70px;height:16px;border:1px solid #c5dccd;border-radius:1px"></div>
<svg class="ab" style="left:1212px;top:26px" width="11" height="10"><path d="M1.5,1.5 H9.5 V6.5 H4 L2,8.5 V1.5 Z" fill="none" stroke="#217346" stroke-width="1"/></svg>
<div class="t" style="left:1223px;top:27.5px;font-size:9px;color:#217346;letter-spacing:-0.1px">Comments</div>

<!-- ===== RIBBON ===== -->
<div class="ab" style="left:45px;top:43px;width:34px;height:46px;background:#e6f0ea"></div>
<!-- Get Data -->
<svg class="ab" style="left:22px;top:45px" width="22" height="23"><g fill="#fafafa" stroke="#505050" stroke-width="1"><path d="M2.5,4 V18 C2.5,20 8,20.5 9,20.5"/><ellipse cx="9" cy="4" rx="6.5" ry="2.5"/><path d="M15.5,4 V11"/></g><rect x="9.5" y="11.5" width="10" height="10" fill="#fff" stroke="#505050"/><rect x="9.5" y="11.5" width="10" height="2" fill="#505050"/><path d="M9.5,16 H19.5 M9.5,19 H19.5 M12.8,13 V21.5 M16.2,13 V21.5" stroke="#505050" stroke-width="0.8"/></svg>
<!-- From Text/CSV -->
<svg class="ab" style="left:54px;top:45px" width="22" height="23"><path d="M1.5,1.5 H10 L14,5.5 V19.5 H1.5 Z" fill="#fafafa" stroke="#505050"/><path d="M10,1.5 V5.5 H14" fill="none" stroke="#505050"/><rect x="9.5" y="9.5" width="9" height="12" rx="1" fill="#fff" stroke="#505050"/><path d="M11.5,12.5 H16.5 M11.5,14.5 H16.5 M11.5,16.5 H16.5 M11.5,18.5 H16.5" stroke="#505050" stroke-width="0.8"/></svg>
<!-- From Web -->
<svg class="ab" style="left:85px;top:45px" width="22" height="23"><path d="M1.5,1.5 H10 L14,5.5 V19.5 H1.5 Z" fill="#fafafa" stroke="#505050"/><path d="M10,1.5 V5.5 H14" fill="none" stroke="#505050"/><circle cx="14" cy="16.2" r="5.2" fill="#3c96dc"/><path d="M9,16.2 H19 M14,11 V21.4 M10,13.8 H18 M10,18.6 H18" stroke="#fff" stroke-width="0.7"/></svg>
<!-- From Table/Range -->
<svg class="ab" style="left:119px;top:45px" width="22" height="22"><rect x="1.5" y="1.5" width="18" height="18.5" fill="#fff" stroke="#555"/><path d="M1.5,1.5 H19.5" stroke="#555" stroke-width="1.4"/><path d="M2.5,3 h4 l-2,2.2 z M8.5,3 h4 l-2,2.2 z M14.5,3 h4 l-2,2.2 z" fill="#3c96dc"/><path d="M1.5,5.5 H19.5" stroke="#555" stroke-width="0.6"/><path d="M1.5,9 H19.5 M1.5,14 H19.5 M7.5,4.5 V20 M13.5,4.5 V20" stroke="#555" stroke-width="0.9"/></svg>
<!-- Recent Sources -->
<svg class="ab" style="left:159px;top:45px" width="22" height="23"><path d="M1.5,1.5 H10 L14,5.5 V19.5 H1.5 Z" fill="#fafafa" stroke="#505050"/><path d="M10,1.5 V5.5 H14" fill="none" stroke="#505050"/><circle cx="14.5" cy="16.3" r="4.7" fill="#fff" stroke="#3c96dc" stroke-width="1.1"/><path d="M14.3,13.5 V16.6 H16.8" fill="none" stroke="#444" stroke-width="0.9"/></svg>
<div class="ab" style="left:186px;top:48px;width:1px;height:26px;background:#e1e1e1"></div>
<!-- Existing Connections -->
<svg class="ab" style="left:204px;top:45px" width="22" height="23"><path d="M1.5,1.5 H10 L14,5.5 V19.5 H1.5 Z" fill="#fafafa" stroke="#505050"/><path d="M10,1.5 V5.5 H14" fill="none" stroke="#505050"/><path d="M10.5,11.5 V19.5 C10.5,21.5 19.5,21.5 19.5,19.5 V11.5" fill="#fafafa" stroke="#f0a04b" stroke-width="1"/><ellipse cx="15" cy="11.5" rx="4.5" ry="1.8" fill="#fafafa" stroke="#f0a04b"/></svg>

<div class="t lb" style="left:31.3px;top:69.7px">Get</div>
<div class="t lb" style="left:31px;top:80.3px">Data<i class="dd"></i></div>
<div class="t lb" style="left:62.2px;top:69.7px">From</div>
<div class="t lb" style="left:62.4px;top:80.3px">Text/CSV</div>
<div class="t lb" style="left:93.1px;top:69.7px">From</div>
<div class="t lb" style="left:93.1px;top:80.3px">Web</div>
<div class="t lb" style="left:129.9px;top:69.7px">From Table/</div>
<div class="t lb" style="left:130px;top:80.3px">Range</div>
<div class="t lb" style="left:167.9px;top:69.7px">Recent</div>
<div class="t lb" style="left:167.9px;top:80.3px">Sources</div>
<div class="t lb" style="left:212.7px;top:69.7px">Existing</div>
<div class="t lb" style="left:212.5px;top:80.3px">Connections</div>
<div class="t lb glb" style="left:126.3px;top:96px">Get &amp; Transform Data</div>
<div class="ab sep" style="left:241px"></div>

<!-- Refresh All -->
<svg class="ab" style="left:253px;top:45px" width="22" height="22"><path d="M1.8,3 V19.5 H4" fill="none" stroke="#8a8a8a" stroke-width="1.2"/><path d="M3.5,1.5 H12 L15.5,5 V19.5 H3.5 Z" fill="#fafafa" stroke="#505050"/><path d="M12,1.5 V5 H15.5" fill="none" stroke="#505050"/><path d="M10.3,15.8 A4.4,4.4 0 0 1 18.6,14.6" fill="none" stroke="#2fb25a" stroke-width="1.3"/><path d="M18.7,17.6 A4.4,4.4 0 0 1 10.4,18.8" fill="none" stroke="#2fb25a" stroke-width="1.3"/><path d="M16.6,14.2 H20.4 L18.6,16.8 Z M12.4,19.2 H8.6 L10.4,16.6 Z" fill="#2fb25a"/></svg>
<div class="t lb" style="left:261px;top:69.7px">Refresh</div>
<div class="t lb" style="left:261px;top:80.3px">All<i class="dd"></i></div>
<svg class="ab" style="left:277px;top:45px" width="14" height="12"><rect x="1.5" y="1.5" width="11" height="9" fill="#fff" stroke="#505050"/><rect x="1.5" y="1.5" width="11" height="1.8" fill="#505050"/><rect x="9" y="3" width="2" height="7" fill="#3c96dc"/></svg>
<div class="t lb ll" style="left:291px;top:47.6px">Queries &amp; Connections</div>
<svg class="ab" style="left:277px;top:61px" width="14" height="13"><rect x="2.5" y="1.5" width="9" height="10.5" fill="#fafafa" stroke="#c0c0c0"/><path d="M4.5,4.5 H6 M7,4.5 H9.5 M4.5,7 H6 M7,7 H9.5 M4.5,9.5 H6 M7,9.5 H9.5" stroke="#c0c0c0"/></svg>
<div class="t lb ll dis" style="left:291px;top:63.6px">Properties</div>
<svg class="ab" style="left:277px;top:76px" width="14" height="13"><path d="M2.5,1.5 H8 L11,4.5 V12 H2.5 Z" fill="#fafafa" stroke="#c0c0c0"/><circle cx="8" cy="9.5" r="2.2" fill="none" stroke="#c0c0c0"/></svg>
<div class="t lb ll dis" style="left:291px;top:80px">Edit Links</div>
<div class="t lb glb" style="left:312px;top:96px">Queries &amp; Connections</div>
<div class="ab sep" style="left:381px"></div>

<!-- Data Types -->
<div class="ab" style="left:388px;top:45px;width:101px;height:40px;border:1px solid #e1e1e1"></div>
<div class="ab" style="left:479px;top:45px;width:10px;height:40px;border:1px solid #e1e1e1;border-right:none"></div>
<div class="ab" style="left:479px;top:59px;width:10px;height:1px;background:#ececec"></div>
<div class="ab" style="left:479px;top:72px;width:10px;height:13px;border:1px solid #c6c6c6"></div>
<svg class="ab" style="left:479px;top:46px" width="10" height="38"><path d="M3.5,5.5 L5,4 L6.5,5.5" fill="none" stroke="#b8b8b8" stroke-width="0.8"/><path d="M3.5,17 L5,18.5 L6.5,17" fill="none" stroke="#b8b8b8" stroke-width="0.8"/><path d="M3,30 H7 M3,31.5 L5,33.5 L7,31.5 Z" fill="#555" stroke="#555" stroke-width="0.8"/></svg>
<svg class="ab" style="left:402px;top:51px" width="18" height="18"><path d="M9,1.5 L16.5,5.5 H1.5 Z" fill="#fff" stroke="#505050"/><path d="M2,6.5 H16 M1.5,15.5 H16.5 M1.5,16.8 H16.5" stroke="#505050"/><path d="M4,7 V14.5 M7.3,7 V14.5 M10.6,7 V14.5 M14,7 V14.5" stroke="#505050" stroke-width="1.1"/></svg>
<svg class="ab" style="left:446px;top:51px" width="20" height="17"><path d="M1.5,3 L6.5,1 L12.5,3 L18.5,1 V14 L12.5,16 L6.5,14 L1.5,16 Z" fill="#fff" stroke="#505050" stroke-linejoin="round"/><path d="M6.5,1 V14 M12.5,3 V16" stroke="#505050"/></svg>
<div class="t lb" style="left:411px;top:72.8px">Stocks</div>
<div class="t lb" style="left:456px;top:72.8px">Geography</div>
<div class="t lb glb" style="left:439.2px;top:96px">Data Types</div>
<div class="ab sep" style="left:496px"></div>

<!-- Sort & Filter -->
<svg class="ab" style="left:502px;top:50px" width="15" height="35"><g font-family="Liberation Sans" font-size="7.2" font-weight="bold"><text x="1.2" y="6.3" fill="#2f8fdd">A</text><text x="1.5" y="12.2" fill="#333">Z</text><text x="1.5" y="27.4" fill="#333">Z</text><text x="1.2" y="33.2" fill="#2f8fdd">A</text></g><path d="M11.5,1 V11.5 M9,9 L11.5,11.7 L14,9" fill="none" stroke="#444" stroke-width="1"/><path d="M11.5,22 V32.5 M9,30 L11.5,32.7 L14,30" fill="none" stroke="#444" stroke-width="1"/></svg>
<svg class="ab" style="left:520px;top:45px" width="21" height="21"><rect x="1.5" y="1.5" width="18" height="18" fill="#fff" stroke="#555"/><path d="M1.5,3.5 H19.5" stroke="#555" stroke-width="0.8"/><path d="M10.5,4 V19.5" stroke="#555"/><text x="3.2" y="11" font-family="Liberation Sans" font-size="6.8" fill="#444">Z</text><text x="3" y="18" font-family="Liberation Sans" font-size="6.8" font-weight="bold" fill="#2f8fdd">A</text><text x="12.3" y="11" font-family="Liberation Sans" font-size="6.8" font-weight="bold" fill="#2f8fdd">A</text><text x="12.5" y="18" font-family="Liberation Sans" font-size="6.8" fill="#444">Z</text></svg>
<div class="t lb" style="left:530px;top:70.3px">Sort</div>
<div class="ab" style="left:547px;top:48px;width:1px;height:39px;background:#e1e1e1"></div>
<svg class="ab" style="left:553px;top:45px" width="21" height="21"><path d="M1.5,2 H19.5 V4 L12.5,12 V19.5 H8.5 V12 L1.5,4 Z" fill="#fafafa" stroke="#505050" stroke-linejoin="round"/></svg>
<div class="t lb" style="left:564px;top:70.3px">Filter</div>
<svg class="ab" style="left:579px;top:46px" width="14" height="42"><path d="M1,1.5 H11 V3 L7,7.5 V11 H5 V7.5 L1,3 Z" fill="none" stroke="#c4c4c4"/><path d="M8,8 L12,12 M12,8 L8,12" stroke="#c4c4c4"/><path d="M1,17 H11 V18.5 L7,23 V27 H5 V23 L1,18.5 Z" fill="none" stroke="#c4c4c4"/><circle cx="10" cy="25" r="2.5" fill="none" stroke="#c4c4c4"/><path d="M1,32.5 H11 V34 L7,38.5 V41.5 H5 V38.5 L1,34 Z" fill="none" stroke="#505050"/><circle cx="10" cy="39" r="2.3" fill="#2f8fdd"/><circle cx="10" cy="39" r="0.9" fill="#fff"/></svg>
<div class="t lb ll dis" style="left:592.6px;top:47.8px">Clear</div>
<div class="t lb ll dis" style="left:592.6px;top:63.6px">Reapply</div>
<div class="t lb ll" style="left:592.6px;top:80px">Advanced</div>
<div class="t lb glb" style="left:566.8px;top:96px">Sort &amp; Filter</div>
<div class="ab sep" style="left:637px"></div>

<!-- Data Tools -->
<svg class="ab" style="left:647px;top:45px" width="24" height="23"><path d="M5,4.5 H12.5 M5,7 H12.5 M7,9.5 H12.5" stroke="#555" stroke-width="0.9"/><path d="M6,10.5 C1,12 1,18 7,19.5 M5,17.5 L8,19.6 L5.5,22" fill="none" stroke="#3c96dc" stroke-width="1.1"/><rect x="15.5" y="1.5" width="6" height="18" fill="#fff" stroke="#555"/><path d="M15.5,7.5 H21.5 M15.5,13.5 H21.5" stroke="#555"/><path d="M17.5,4.5 H19.5 M17.5,10.5 H19.5 M17.5,16.5 H19.5" stroke="#3c96dc"/></svg>
<svg class="ab" style="left:680px;top:44px" width="23" height="21"><rect x="2.5" y="4.5" width="18.5" height="14" fill="#fff" stroke="#555"/><path d="M2.5,9 H21 M2.5,13.8 H21 M8.5,4.5 V18.5 M14.8,4.5 V18.5" stroke="#555" stroke-width="0.9"/><path d="M8.5,4.5 H14.8 V18.5 H8.5 Z M2.5,9 H14.8 V13.8 H2.5 Z" fill="#7fb9ea" fill-opacity="0.8"/><path d="M8.5,4.5 V18.5 M14.8,4.5 V18.5 M2.5,9 H21 M2.5,13.8 H21" stroke="#2f7fd0" stroke-width="0.9"/><path d="M6,0.5 L1.5,8 H4.5 L2.5,13 L8.5,5.5 H5.5 L7.8,0.5 Z" fill="#f7c54a" stroke="#ef8a2a" stroke-width="0.7"/></svg>
<svg class="ab" style="left:718px;top:45px" width="20" height="23"><rect x="1.5" y="1.5" width="13" height="6" fill="#7fb9ea" stroke="#2f7fd0"/><rect x="1.5" y="7.5" width="13" height="6" fill="#fff" stroke="#666"/><path d="M1.5,13.5 H11 L14.5,16.5 L11,19.5 H1.5 Z" fill="#7fb9ea" stroke="#2f7fd0"/><path d="M10,12.5 L18.5,21 M18.5,12.5 L10,21" stroke="#ee5a66" stroke-width="1.2"/></svg>
<svg class="ab" style="left:755px;top:45px" width="24" height="21"><rect x="1.5" y="3.5" width="11" height="5" fill="#fff" stroke="#555"/><rect x="1.5" y="12.5" width="11" height="5" fill="#fff" stroke="#555"/><path d="M13,4.5 L15.5,7 L21,1.5" fill="none" stroke="#2fb34a" stroke-width="1.2"/><circle cx="16.5" cy="15.3" r="3.5" fill="#fff" stroke="#e8464f" stroke-width="1.1"/><path d="M14.2,17.6 L18.8,13" stroke="#e8464f" stroke-width="1.1"/></svg>
<svg class="ab" style="left:801px;top:45px" width="20" height="21"><rect x="1.5" y="1.5" width="7" height="18" fill="#fff" stroke="#555"/><path d="M1.5,7.5 H8.5 M1.5,13.5 H8.5" stroke="#555"/><path d="M3,10.5 H10 M8,8.5 L10.2,10.5 L8,12.5" fill="none" stroke="#3c96dc" stroke-width="1"/><rect x="11.5" y="8" width="7" height="5" fill="#fff" stroke="#2f7fd0"/><path d="M13.5,10.5 H16.5" stroke="#555" stroke-width="0.8"/></svg>
<svg class="ab" style="left:847px;top:45px" width="22" height="21"><rect x="1.5" y="7" width="7" height="7" fill="#f4f4f4" stroke="#bbb"/><rect x="12.5" y="1.5" width="7" height="7" fill="#f4f4f4" stroke="#bbb"/><rect x="12.5" y="12.5" width="7" height="7" fill="#f4f4f4" stroke="#bbb"/><path d="M8.5,10.5 H10.5 L12.5,5 M10.5,10.5 L12.5,16" fill="none" stroke="#bbb"/></svg>
<svg class="ab" style="left:894px;top:45px" width="22" height="22"><path d="M3,4 L11,1 L19.5,4 V17 L11,21 L3,17 Z" fill="#6cb33f"/><path d="M11,4.5 V20 M12.5,8 H19 M12.5,11 H19 M12.5,14 H19 M15.5,5.5 V19" stroke="#fff" stroke-width="0.7"/><path d="M5,7 V16 L9.5,18.5 V9.5 Z" fill="none" stroke="#fff" stroke-width="0.7"/><path d="M7.5,11 V14.5 L6.5,14" fill="none" stroke="#fff" stroke-width="0.7"/></svg>
<div class="t lb" style="left:659.8px;top:69.7px">Text to</div>
<div class="t lb" style="left:659.8px;top:80.3px">Columns</div>
<div class="t lb" style="left:691.3px;top:69.7px">Flash</div>
<div class="t lb" style="left:691.3px;top:80.3px">Fill</div>
<div class="t lb" style="left:724.7px;top:69.7px">Remove</div>
<div class="t lb" style="left:724.7px;top:80.3px">Duplicates</div>
<div class="t lb" style="left:766.3px;top:69.7px">Data</div>
<div class="t lb" style="left:766px;top:80.3px">Validation<i class="dd"></i></div>
<div class="t lb" style="left:810.1px;top:69.7px">Consolidate</div>
<div class="t lb dis" style="left:857.6px;top:69.7px">Relationships</div>
<div class="t lb" style="left:903.6px;top:69.7px">Manage</div>
<div class="t lb" style="left:903.6px;top:80.3px">Data Model</div>
<div class="t lb glb" style="left:783.6px;top:96px">Data Tools</div>
<div class="ab sep" style="left:931px"></div>

<!-- Forecast -->
<svg class="ab" style="left:945px;top:47px" width="23" height="21"><rect x="1.5" y="1.5" width="17" height="13" fill="#fff" stroke="#666"/><rect x="1.5" y="1.5" width="5.5" height="4.3" fill="#5aa3e6" stroke="#2f7fd0"/><rect x="1.5" y="10.2" width="5.5" height="4.3" fill="#5aa3e6" stroke="#2f7fd0"/><path d="M7,1.5 V14.5 M12.8,1.5 V14.5 M1.5,5.8 H18.5 M1.5,10.2 H18.5" stroke="#666" stroke-width="0.8"/><path d="M15,9 C15,6.8 20,6.8 20,9.2 C20,11 17.5,11 17.5,13.5 M17.5,15.5 V16.8" fill="none" stroke="#2f8fdd" stroke-width="1.2"/></svg>
<svg class="ab" style="left:979px;top:46px" width="22" height="20"><path d="M1.5,1.5 H19.5 V15.5 H6 L3.5,18 H1.5 Z" fill="#fff" stroke="#555"/><path d="M1.5,6 H19.5 M1.5,10.8 H19.5 M7.5,1.5 V15.5 M13.5,1.5 V15.5" stroke="#555" stroke-width="0.8"/><path d="M2.5,12.5 L6,9.5 L8.5,10.5 L11,7.5" fill="none" stroke="#3c96dc" stroke-width="1.1"/><path d="M11,7.5 L14.5,6.5 L18,2.8 M15.5,2.5 H18.3 V5.3" fill="none" stroke="#ee4a5a" stroke-width="1.1"/></svg>
<div class="t lb" style="left:955.4px;top:69.7px">What-If</div>
<div class="t lb" style="left:955px;top:80.3px">Analysis<i class="dd"></i></div>
<div class="t lb" style="left:990px;top:69.7px">Forecast</div>
<div class="t lb" style="left:990px;top:80.3px">Sheet</div>
<div class="t lb glb" style="left:970.9px;top:96px">Forecast</div>
<div class="ab sep" style="left:1011px"></div>

<!-- Outline -->
<svg class="ab" style="left:1021px;top:46px" width="20" height="20"><path d="M5.5,1.5 H3.5 V7 M3.5,12 V17.5 H5.5" fill="none" stroke="#777"/><rect x="1.5" y="7" width="4" height="5" fill="#fff" stroke="#555"/><path d="M2.3,9.5 H4.7 M3.5,8.3 V10.7" stroke="#2f8fdd" stroke-width="0.8"/><rect x="9.5" y="1.5" width="8" height="16.5" fill="#fff" stroke="#555"/><path d="M9.5,5.5 H17.5 M9.5,9.5 H17.5 M9.5,13.5 H17.5" stroke="#555" stroke-width="0.8"/></svg>
<div class="t lb" style="left:1030.1px;top:69.7px">Group</div>
<div class="t lb" style="left:1030.1px;top:80.3px"><i class="dd" style="margin:0"></i></div>
<svg class="ab" style="left:1052px;top:46px" width="20" height="20"><path d="M5.5,1.5 H3.5 V7 M3.5,12 V17.5 H5.5" fill="none" stroke="#777"/><rect x="1.5" y="7" width="4.5" height="5" fill="#fff" stroke="#e8464f"/><path d="M2,11.5 L5.5,7.5" stroke="#e8464f" stroke-width="0.8"/><rect x="9.5" y="1.5" width="8" height="16.5" fill="#fff" stroke="#555"/><path d="M9.5,5.5 H17.5 M9.5,9.5 H17.5 M9.5,13.5 H17.5" stroke="#555" stroke-width="0.8"/></svg>
<div class="t lb" style="left:1061px;top:69.7px">Ungroup</div>
<div class="t lb" style="left:1061px;top:80.3px"><i class="dd" style="margin:0"></i></div>
<svg class="ab" style="left:1084px;top:46px" width="22" height="20"><path d="M5.5,1.5 H3.5 V5" fill="none" stroke="#777"/><rect x="1.5" y="5.5" width="4.5" height="5" fill="#fff" stroke="#555"/><rect x="1.5" y="12" width="4.5" height="5" fill="#fff" stroke="#555"/><path d="M2.3,8 H5.2 M3.75,6.5 V9.5 M2.3,14.5 H5.2 M3.75,13 V16" stroke="#2f8fdd" stroke-width="0.8"/><rect x="7.5" y="1.5" width="12" height="16.5" fill="#fff" stroke="#555"/><path d="M7.5,5.5 H19.5 M7.5,9.5 H19.5 M7.5,13.5 H19.5 M11.5,1.5 V18 M15.5,1.5 V18" stroke="#555" stroke-width="0.8"/></svg>
<div class="t lb" style="left:1095.1px;top:69.7px">Subtotal</div>
<svg class="ab" style="left:1112px;top:45px" width="14" height="26"><path d="M1,3 H4 M2.5,1.5 V4.5 M5.5,2 H11 M6.5,4.5 H11 M6.5,7 H11 M5.5,9 H11" stroke="#c4c4c4" stroke-width="0.8"/><path d="M1,18 H4 M5.5,16 H11 M6.5,18.5 H11 M6.5,21 H11 M5.5,23 H11" stroke="#c4c4c4" stroke-width="0.8"/></svg>
<div class="t lb ll dis" style="left:1126.2px;top:46.8px">Show Detail</div>
<div class="t lb ll dis" style="left:1126.2px;top:61.8px">Hide Detail</div>
<div class="t lb glb" style="left:1088.4px;top:96px">Outline</div>
<svg class="ab" style="left:1168px;top:97px" width="8" height="8"><path d="M1.5,6 V1.5 H6" fill="none" stroke="#888" stroke-width="0.8"/><path d="M3.5,3.5 L6.5,6.5 M4,6.5 H6.5 V4" fill="none" stroke="#666" stroke-width="0.8"/></svg>
<div class="ab sep" style="left:1176px"></div>

<!-- Analyze -->
<svg class="ab" style="left:1183px;top:44.5px" width="13" height="13"><rect x="1.5" y="1.5" width="10" height="10" fill="#fff" stroke="#888"/><path d="M1.5,4.5 H11.5 M1.5,7.5 H11.5 M4.5,1.5 V11.5 M7.5,1.5 V11.5" stroke="#aaa" stroke-width="0.7"/><rect x="5" y="5" width="6.5" height="1.6" fill="#2f7fd0"/></svg>
<div class="t lb ll" style="left:1196.7px;top:46.8px">Data Analysis</div>
<svg class="ab" style="left:1183px;top:59.5px" width="14" height="13"><path d="M1.5,3.5 C1.5,0.8 6.5,0.8 6.5,3.5 C6.5,5.3 4,5.5 4,7.5 M4,9 V10.2" fill="none" stroke="#2f7fd0" stroke-width="1.2"/><path d="M6.5,9.5 H11.5 M9.8,7.8 L11.6,9.5 L9.8,11.2" fill="none" stroke="#2f8fdd" stroke-width="0.9"/></svg>
<div class="t lb ll" style="left:1196.7px;top:61.8px">Solver</div>
<div class="t lb glb" style="left:1213.8px;top:96px">Analyze</div>
<div class="ab sep" style="left:1252px"></div>
<svg class="ab" style="left:1266px;top:96px" width="7" height="7"><path d="M1,6 L5.5,1.5 M3,1.5 H5.5 V4" fill="none" stroke="#444" stroke-width="0.9"/></svg>
<div class="ab" style="left:12px;top:105px;width:1260px;height:1px;background:#d4d4d4"></div>

<!-- ===== FORMULA BAR ===== -->
<div class="ab" style="left:15px;top:112px;width:68px;height:17px;border:1px solid #c6c6c6;background:#fff"></div>
<div class="t" style="left:19.5px;top:117px;font-size:8.8px;color:#333;letter-spacing:-0.2px">M2</div>
<svg class="ab" style="left:73px;top:119px" width="7" height="5"><path d="M1,1 H6 L3.5,3.5 Z" fill="#555"/></svg>
<svg class="ab" style="left:91px;top:117px" width="4" height="10"><circle cx="2" cy="1.5" r="0.55" fill="#999"/><circle cx="2" cy="4.5" r="0.55" fill="#999"/><circle cx="2" cy="7.5" r="0.55" fill="#999"/></svg>
<div class="ab" style="left:102px;top:112px;width:73px;height:17px;border:1px solid #d4d4d4;background:#fff"></div>
<svg class="ab" style="left:103px;top:113px" width="72" height="15"><path d="M8.5,4 L15,10.5 M15,4 L8.5,10.5" stroke="#a8a8a8" stroke-width="0.9"/><path d="M31.5,7.5 L34.5,10.5 L39.5,4" fill="none" stroke="#a8a8a8" stroke-width="0.9"/></svg>
<div class="t" style="left:158.5px;top:115.5px;font-family:'Liberation Serif',serif;font-style:italic;font-size:10.5px;color:#444;letter-spacing:-0.3px">f<span style="font-size:7.5px">x</span></div>
<div class="ab" style="left:177px;top:112px;width:1100px;height:31px;border:1px solid #c6c6c6;background:#fff"></div>
<div class="t" style="left:186px;top:117px;font-size:8.8px;color:#333">0</div>
<svg class="ab" style="left:1267px;top:118px" width="6" height="6"><path d="M1,4.5 L3,2 L5,4.5" fill="none" stroke="#555" stroke-width="0.9"/></svg>
<div class="ab" style="left:1272px;top:0;width:7px;height:453px;background:#fff"></div>

<!-- red arrow -->
<svg class="ab" style="left:530px;top:100px" width="60" height="50"><path d="M19.5,2 H39.7 V22.2 H50.3 L29.3,42.7 L8.5,22.2 H19.5 Z" fill="#ff0000"/></svg>
</body></html>
